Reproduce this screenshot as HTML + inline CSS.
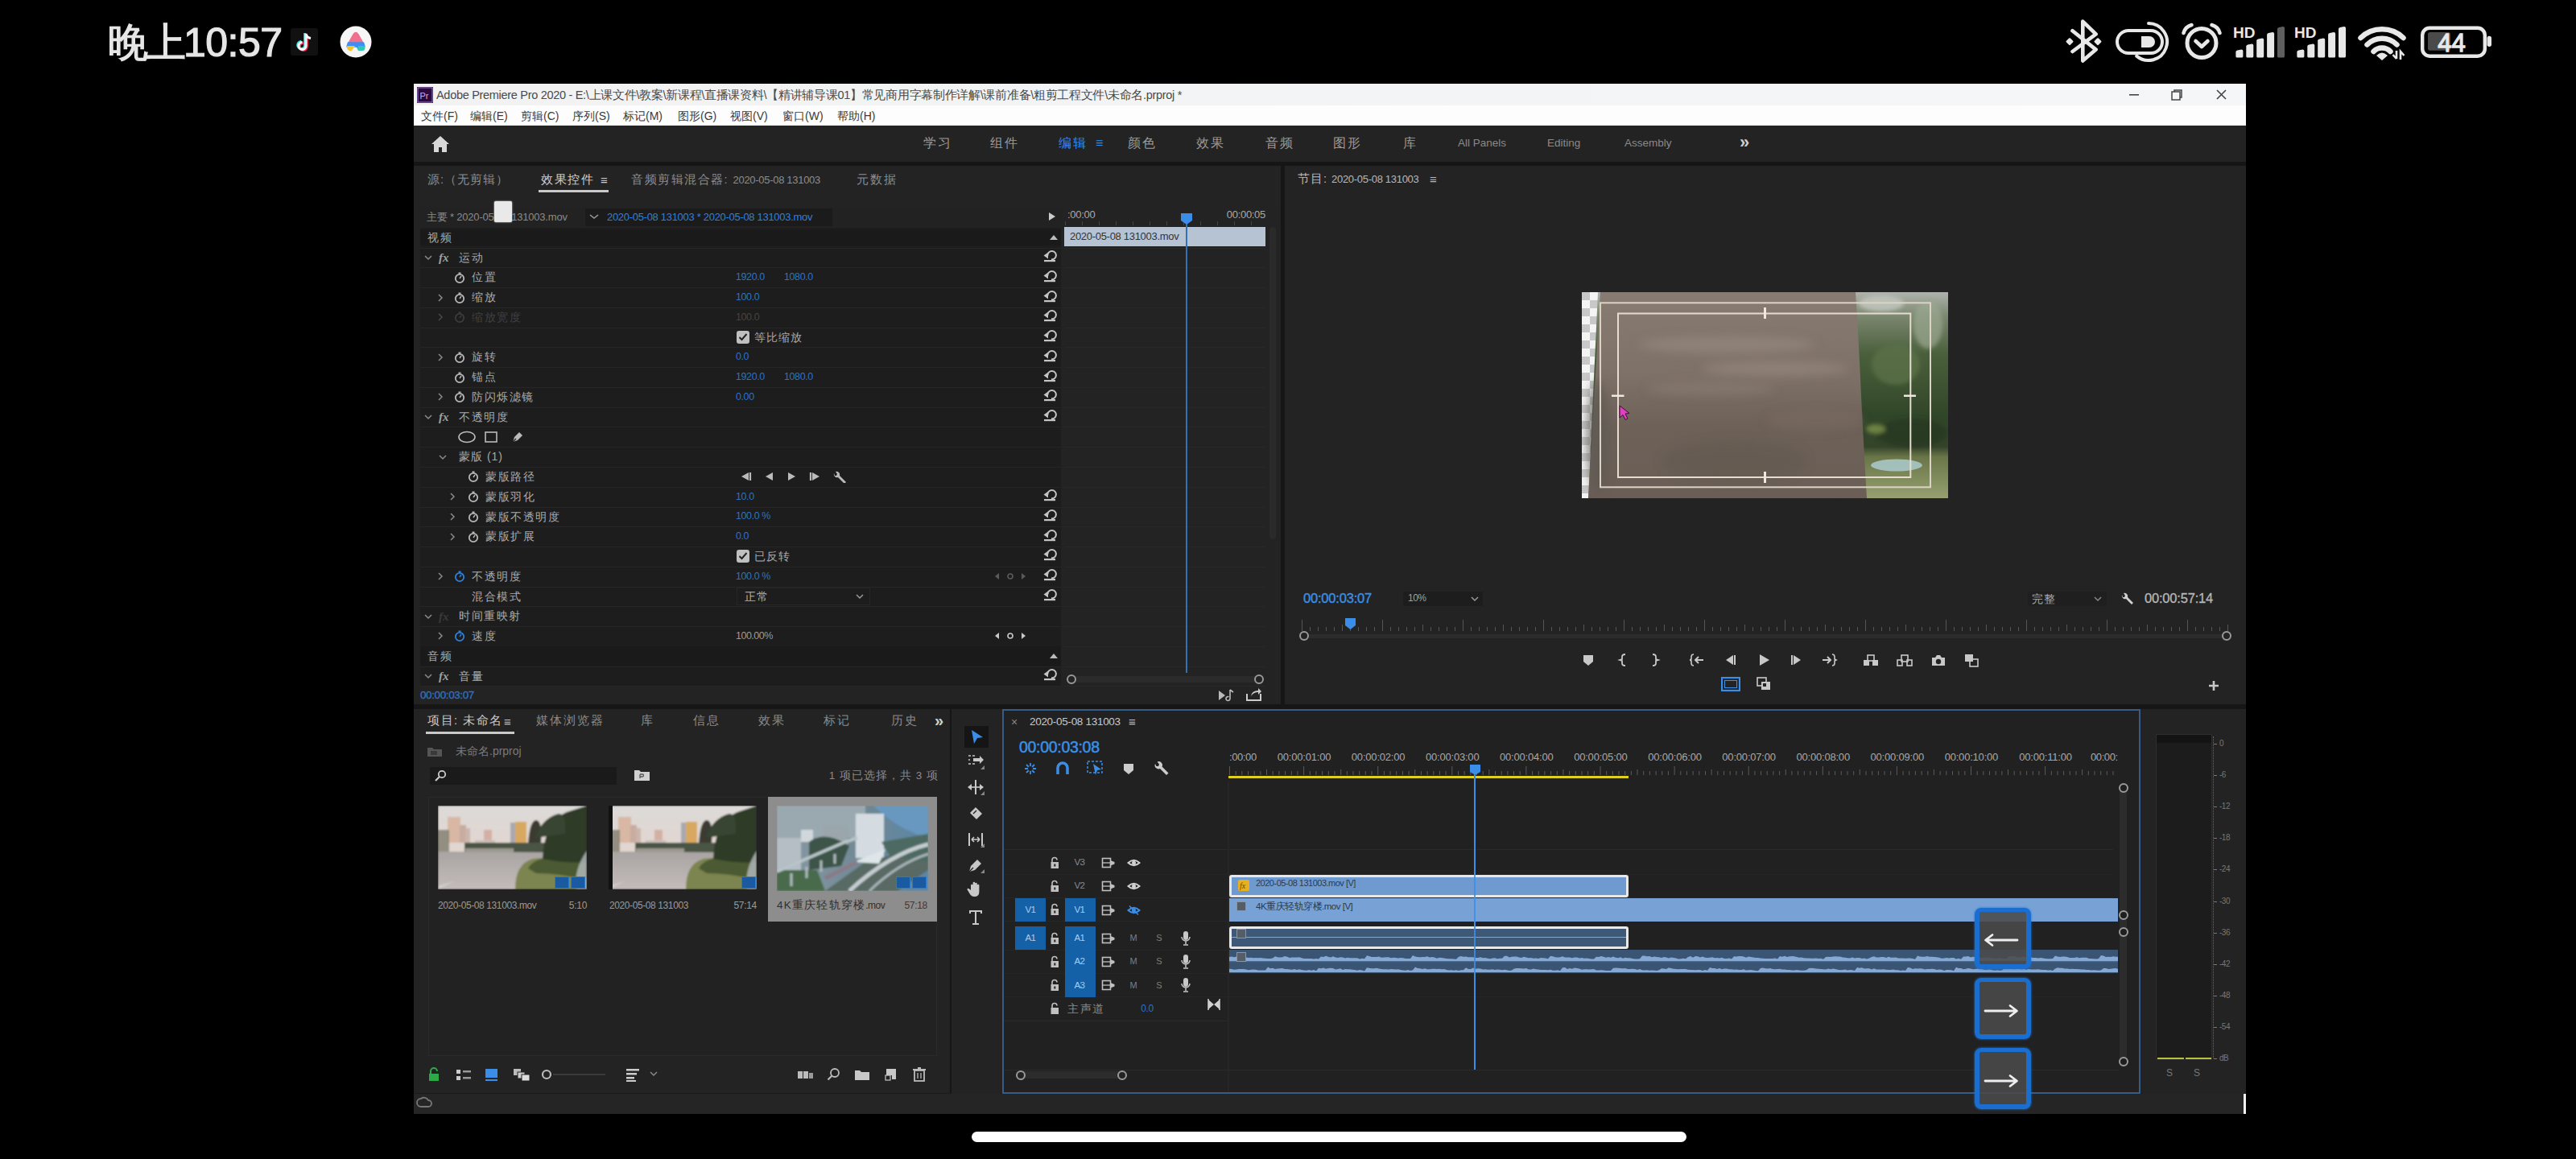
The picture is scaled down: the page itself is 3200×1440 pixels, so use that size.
<!DOCTYPE html><html><head><meta charset="utf-8"><style>html,body{margin:0;padding:0;background:#000;width:3200px;height:1440px;overflow:hidden;}body{position:relative;font-family:"Liberation Sans", sans-serif;}div{position:absolute;box-sizing:border-box;}.t{white-space:nowrap;}</style></head><body><div class="t" style="left:134px;top:23.0px;font-size:50px;line-height:60.0px;color:#e6e6e6;letter-spacing:-3px;-webkit-text-stroke:1.2px #e6e6e6;">晚上<span style="letter-spacing:-0.5px">10:57</span></div>
<svg style="position:absolute;left:361px;top:35px;" width="34" height="34" viewBox="0 0 34 34"><rect width="34" height="34" rx="3" fill="#111"/><path d="M19 7v15a4.5 4.5 0 1 1-4.5-4.5" fill="none" stroke="#25f4ee" stroke-width="3.2" transform="translate(-1.2,-1)"/><path d="M19 7v15a4.5 4.5 0 1 1-4.5-4.5" fill="none" stroke="#fe2c55" stroke-width="3.2" transform="translate(1.2,1)"/><path d="M19 7v15a4.5 4.5 0 1 1-4.5-4.5M19 7c0.5 3 2.5 5 6 5.5" fill="none" stroke="#fff" stroke-width="3"/></svg>
<svg style="position:absolute;left:422px;top:32px;" width="40" height="40" viewBox="0 0 40 40"><circle cx="20" cy="20" r="19.5" fill="#f6f6f6"/><path d="M17.5 10.5 Q20 7 22.5 10.5 L29 22 L11 22 Z" fill="#f0708e" stroke="#f0708e" stroke-width="2" stroke-linejoin="round"/><path d="M10.5 21 L29.5 21 L31 26 L9 26 Z" fill="#3d8ff2" stroke="#3d8ff2" stroke-width="1.5" stroke-linejoin="round"/><path d="M20 25 L31 25 Q32.5 31 28 31 L23 31 Z" fill="#2ec8b4"/><path d="M9 25 L19 25 L15 31 Q8.5 32 9 25 Z" fill="#f6c42c"/><path d="M19 25 L23 25 L23 28 Z" fill="#3d8ff2"/></svg>
<svg style="position:absolute;left:2562px;top:24px;" width="52" height="54" viewBox="0 0 52 54"><path d="M12.5 14.3 L41.6 37.6 L25.3 51.6 L25.3 2.6 L41.6 18.4 L12.5 40" fill="none" stroke="#e8e8e8" stroke-width="4.6" stroke-linejoin="round" stroke-linecap="round"/><rect x="5.5" y="24.2" width="7" height="7" rx="1.2" transform="rotate(45 9 27.7)" fill="#e8e8e8"/><rect x="40.5" y="24.2" width="7" height="7" rx="1.2" transform="rotate(45 44 27.7)" fill="#e8e8e8"/></svg>
<svg style="position:absolute;left:2626px;top:26px;" width="72" height="52" viewBox="0 0 72 52"><rect x="4" y="12" width="56" height="28" rx="14" fill="none" stroke="#e8e8e8" stroke-width="4"/><path d="M34 19 h10 a7 7 0 0 1 0 14 h-10z" fill="#e8e8e8"/><path d="M43 3 A23 23 0 1 1 28.2 43.6" fill="none" stroke="#e8e8e8" stroke-width="4" stroke-linecap="round"/></svg>
<svg style="position:absolute;left:2708px;top:24px;" width="54" height="54" viewBox="0 0 54 54"><circle cx="27" cy="29.5" r="18" fill="none" stroke="#e8e8e8" stroke-width="5"/><path d="M19.5 27 l7.5 7 l7.5 -7" fill="none" stroke="#e8e8e8" stroke-width="4.6" stroke-linecap="round" stroke-linejoin="round"/><path d="M4.5 17 a14 14 0 0 1 10 -10 M49.5 17 a14 14 0 0 0 -10 -10" fill="none" stroke="#e8e8e8" stroke-width="4.6" stroke-linecap="round"/></svg>
<svg style="position:absolute;left:2774px;top:31px;" width="66" height="42" viewBox="0 0 66 42"><text x="0" y="15.5" font-family="Liberation Sans" font-weight="bold" font-size="19" fill="#e8e8e8">HD</text><path d="M3.4 33.6 Q3.4 32.1 5.4 31.6 L10.4 30.6 Q12.4 30.6 12.4 32.6 L12.4 39 Q12.4 40.5 10.9 40.5 L4.9 40.5 Q3.4 40.5 3.4 39z" fill="#e8e8e8"/><path d="M16.3 26.6 Q16.3 25.1 18.3 24.6 L23.3 23.6 Q25.3 23.6 25.3 25.6 L25.3 39 Q25.3 40.5 23.8 40.5 L17.8 40.5 Q16.3 40.5 16.3 39z" fill="#e8e8e8"/><path d="M29.2 19.6 Q29.2 18.1 31.2 17.6 L36.2 16.6 Q38.2 16.6 38.2 18.6 L38.2 39 Q38.2 40.5 36.7 40.5 L30.7 40.5 Q29.2 40.5 29.2 39z" fill="#e8e8e8"/><path d="M42.1 12.0 Q42.1 10.5 44.1 10.0 L49.1 9.0 Q51.1 9.0 51.1 11.0 L51.1 39 Q51.1 40.5 49.6 40.5 L43.6 40.5 Q42.1 40.5 42.1 39z" fill="#e8e8e8"/><path d="M55.0 5.0 Q55.0 3.5 57.0 3.0 L62.0 2.0 Q64.0 2.0 64.0 4.0 L64.0 39 Q64.0 40.5 62.5 40.5 L56.5 40.5 Q55.0 40.5 55.0 39z" fill="#5e5e5e"/></svg>
<svg style="position:absolute;left:2850px;top:31px;" width="66" height="42" viewBox="0 0 66 42"><text x="0" y="15.5" font-family="Liberation Sans" font-weight="bold" font-size="19" fill="#e8e8e8">HD</text><path d="M3.4 33.6 Q3.4 32.1 5.4 31.6 L10.4 30.6 Q12.4 30.6 12.4 32.6 L12.4 39 Q12.4 40.5 10.9 40.5 L4.9 40.5 Q3.4 40.5 3.4 39z" fill="#e8e8e8"/><path d="M16.3 26.6 Q16.3 25.1 18.3 24.6 L23.3 23.6 Q25.3 23.6 25.3 25.6 L25.3 39 Q25.3 40.5 23.8 40.5 L17.8 40.5 Q16.3 40.5 16.3 39z" fill="#e8e8e8"/><path d="M29.2 19.6 Q29.2 18.1 31.2 17.6 L36.2 16.6 Q38.2 16.6 38.2 18.6 L38.2 39 Q38.2 40.5 36.7 40.5 L30.7 40.5 Q29.2 40.5 29.2 39z" fill="#e8e8e8"/><path d="M42.1 12.0 Q42.1 10.5 44.1 10.0 L49.1 9.0 Q51.1 9.0 51.1 11.0 L51.1 39 Q51.1 40.5 49.6 40.5 L43.6 40.5 Q42.1 40.5 42.1 39z" fill="#e8e8e8"/><path d="M55.0 5.0 Q55.0 3.5 57.0 3.0 L62.0 2.0 Q64.0 2.0 64.0 4.0 L64.0 39 Q64.0 40.5 62.5 40.5 L56.5 40.5 Q55.0 40.5 55.0 39z" fill="#e8e8e8"/></svg>
<svg style="position:absolute;left:2928px;top:28px;" width="62" height="48" viewBox="0 0 62 48"><path d="M4.5 19 a38 38 0 0 1 53 0" fill="none" stroke="#e8e8e8" stroke-width="6.5" stroke-linecap="round"/><path d="M12.5 27.5 a26 26 0 0 1 37 0" fill="none" stroke="#e8e8e8" stroke-width="6.5" stroke-linecap="round"/><path d="M20.5 36 a14.5 14.5 0 0 1 21 0" fill="none" stroke="#e8e8e8" stroke-width="6.5" stroke-linecap="round"/><path d="M24 41 q7 -7 14 0 l-7 6z" fill="#e8e8e8"/><path d="M49 35 v10 M44.5 40 l4.5 5 M54 46 v-10 l4.5 5" fill="none" stroke="#e8e8e8" stroke-width="2.6"/></svg>
<svg style="position:absolute;left:3005px;top:30px;" width="94" height="44" viewBox="0 0 94 44"><rect x="4.2" y="4.7" width="77.6" height="35" rx="9" fill="none" stroke="#e8e8e8" stroke-width="4.4"/><rect x="11" y="10" width="28" height="22.7" rx="2.5" fill="#4a4a4a"/><rect x="84.5" y="14.7" width="5.5" height="13.3" rx="2.7" fill="#e8e8e8"/><text x="40.5" y="33.5" text-anchor="middle" font-family="Liberation Sans" font-size="31" fill="#e8e8e8" stroke="#e8e8e8" stroke-width="1.3">44</text></svg>
<div style="left:1207px;top:1406px;width:888px;height:13px;background:#fff;border-radius:7px;"></div>
<div style="left:514px;top:104px;width:2276px;height:1280px;background:#232323;"></div>
<div style="left:514px;top:104px;width:2276px;height:27px;background:linear-gradient(90deg,#f2f2f2,#f4f6f8);"></div>
<svg style="position:absolute;left:518px;top:108px;" width="20" height="20" viewBox="0 0 20 20"><rect width="20" height="20" fill="#2b0a3d"/><rect x="1" y="1" width="18" height="18" fill="none" stroke="#9a7fd6" stroke-width="1"/><text x="3.5" y="14.5" font-family="Liberation Sans" font-size="11" fill="#c9a8ff">Pr</text></svg>
<div class="t" style="left:542px;top:109.8px;font-size:14.5px;line-height:17.4px;color:#4a4a4a;letter-spacing:-0.3px;">Adobe Premiere Pro 2020 - E:\上课文件\教案\新课程\直播课资料\【精讲辅导课01】常见商用字幕制作详解\课前准备\粗剪工程文件\未命名.prproj *</div>
<svg style="position:absolute;left:2640px;top:110px;" width="140" height="16" viewBox="0 0 140 16"><rect x="5" y="7" width="12" height="1.6" fill="#444"/><rect x="58" y="4" width="10" height="10" fill="none" stroke="#444" stroke-width="1.5"/><path d="M61 4 v-2 h9 v9 h-2" fill="none" stroke="#444" stroke-width="1.5"/><path d="M114 2 l11 11 M125 2 l-11 11" stroke="#444" stroke-width="1.6"/></svg>
<div style="left:514px;top:131px;width:2276px;height:25px;background:#fdfdfd;"></div>
<div class="t" style="left:523px;top:135.6px;font-size:14px;line-height:16.8px;color:#3a3a3a;">文件(F)</div>
<div class="t" style="left:584px;top:135.6px;font-size:14px;line-height:16.8px;color:#3a3a3a;">编辑(E)</div>
<div class="t" style="left:647px;top:135.6px;font-size:14px;line-height:16.8px;color:#3a3a3a;">剪辑(C)</div>
<div class="t" style="left:711px;top:135.6px;font-size:14px;line-height:16.8px;color:#3a3a3a;">序列(S)</div>
<div class="t" style="left:774px;top:135.6px;font-size:14px;line-height:16.8px;color:#3a3a3a;">标记(M)</div>
<div class="t" style="left:842px;top:135.6px;font-size:14px;line-height:16.8px;color:#3a3a3a;">图形(G)</div>
<div class="t" style="left:907px;top:135.6px;font-size:14px;line-height:16.8px;color:#3a3a3a;">视图(V)</div>
<div class="t" style="left:972px;top:135.6px;font-size:14px;line-height:16.8px;color:#3a3a3a;">窗口(W)</div>
<div class="t" style="left:1040px;top:135.6px;font-size:14px;line-height:16.8px;color:#3a3a3a;">帮助(H)</div>
<div style="left:514px;top:156px;width:2276px;height:45px;background:#232323;"></div>
<div style="left:514px;top:201px;width:2276px;height:5px;background:#151515;"></div>
<svg style="position:absolute;left:535px;top:168px;" width="24" height="22" viewBox="0 0 24 22"><path d="M12 1 L23 11 L20 11 L20 21 L14 21 L14 15 L10 15 L10 21 L4 21 L4 11 L1 11 Z" fill="#d8d8d8"/></svg>
<div class="t" style="left:1147px;top:168.4px;font-size:16px;line-height:19.2px;color:#9a9a9a;letter-spacing:2px;">学习</div>
<div class="t" style="left:1230px;top:168.4px;font-size:16px;line-height:19.2px;color:#9a9a9a;letter-spacing:2px;">组件</div>
<div class="t" style="left:1315px;top:168.4px;font-size:16px;line-height:19.2px;color:#2d8ceb;letter-spacing:2px;">编辑</div>
<div class="t" style="left:1401px;top:168.4px;font-size:16px;line-height:19.2px;color:#9a9a9a;letter-spacing:2px;">颜色</div>
<div class="t" style="left:1486px;top:168.4px;font-size:16px;line-height:19.2px;color:#9a9a9a;letter-spacing:2px;">效果</div>
<div class="t" style="left:1572px;top:168.4px;font-size:16px;line-height:19.2px;color:#9a9a9a;letter-spacing:2px;">音频</div>
<div class="t" style="left:1656px;top:168.4px;font-size:16px;line-height:19.2px;color:#9a9a9a;letter-spacing:2px;">图形</div>
<div class="t" style="left:1743px;top:168.4px;font-size:16px;line-height:19.2px;color:#9a9a9a;letter-spacing:2px;">库</div>
<div class="t" style="left:1811px;top:169.9px;font-size:13.5px;line-height:16.2px;color:#8a8a8a;">All Panels</div>
<div class="t" style="left:1922px;top:169.9px;font-size:13.5px;line-height:16.2px;color:#8a8a8a;">Editing</div>
<div class="t" style="left:2018px;top:169.9px;font-size:13.5px;line-height:16.2px;color:#8a8a8a;">Assembly</div>
<div class="t" style="left:1361px;top:168.4px;font-size:16px;line-height:19.2px;color:#2d8ceb;">≡</div>
<div class="t" style="left:2161px;top:163.8px;font-size:22px;line-height:26.4px;color:#cfcfcf;font-weight:bold;">»</div>
<div style="left:514px;top:206px;width:1079px;height:669px;background:#232323;"></div>
<div style="left:1591px;top:206px;width:5px;height:669px;background:#161616;"></div>
<div class="t" style="left:531px;top:214.8px;font-size:14.5px;line-height:17.4px;color:#8c8c8c;letter-spacing:1px;">源:（无剪辑）</div>
<div class="t" style="left:672px;top:214.8px;font-size:14.5px;line-height:17.4px;color:#d0d0d0;letter-spacing:1.5px;">效果控件</div>
<div class="t" style="left:746px;top:214.5px;font-size:15px;line-height:18.0px;color:#d0d0d0;">≡</div>
<div style="left:669px;top:236px;width:87px;height:3px;background:#c9c9c9;"></div>
<div class="t" style="left:784px;top:214.8px;font-size:14.5px;line-height:17.4px;color:#8c8c8c;letter-spacing:1.5px;">音频剪辑混合器: <span style="font-size:13px;letter-spacing:-0.3px">2020-05-08 131003</span></div>
<div class="t" style="left:1064px;top:214.8px;font-size:14.5px;line-height:17.4px;color:#8c8c8c;letter-spacing:2px;">元数据</div>
<div style="left:522px;top:258px;width:1069px;height:24px;background:#222;"></div>
<div class="t" style="left:530px;top:262.2px;font-size:13px;line-height:15.6px;color:#8a8a8a;letter-spacing:-0.2px;">主要 * 2020-05-08 131003.mov</div>
<div style="left:727px;top:259px;width:307px;height:22px;background:#1b1b1b;"></div>
<svg style="position:absolute;left:731px;top:264px;" width="14" height="10" viewBox="0 0 14 10"><path d="M2 3 l5 4 l5 -4" fill="none" stroke="#999" stroke-width="1.6"/></svg>
<div class="t" style="left:754px;top:262.2px;font-size:13px;line-height:15.6px;color:#2f80d8;letter-spacing:-0.3px;">2020-05-08 131003 * 2020-05-08 131003.mov</div>
<div style="left:614px;top:250px;width:22px;height:26px;background:#e9e9e9;border-radius:2px;box-shadow:0 0 2px #fff;"></div>
<div style="left:522px;top:283px;width:796px;height:570px;background:#1d1d1d;"></div>
<div style="left:522px;top:285px;width:796px;height:20px;background:#1a1a1a;"></div>
<div class="t" style="left:531px;top:287.2px;font-size:14px;line-height:16.8px;color:#a9a9a9;letter-spacing:2px;">视频</div>
<svg style="position:absolute;left:1302px;top:290px;" width="14" height="10" viewBox="0 0 14 10"><path d="M2 8 l5 -6 l5 6z" fill="#bbb"/></svg>
<div style="left:522px;top:308px;width:796px;height:1px;background:#262626;"></div>
<div style="left:522px;top:332px;width:796px;height:1px;background:#262626;"></div>
<div style="left:522px;top:357px;width:796px;height:1px;background:#262626;"></div>
<div style="left:522px;top:382px;width:796px;height:1px;background:#262626;"></div>
<div style="left:522px;top:407px;width:796px;height:1px;background:#262626;"></div>
<div style="left:522px;top:431px;width:796px;height:1px;background:#262626;"></div>
<div style="left:522px;top:456px;width:796px;height:1px;background:#262626;"></div>
<div style="left:522px;top:481px;width:796px;height:1px;background:#262626;"></div>
<div style="left:522px;top:506px;width:796px;height:1px;background:#262626;"></div>
<div style="left:522px;top:530px;width:796px;height:1px;background:#262626;"></div>
<div style="left:522px;top:555px;width:796px;height:1px;background:#262626;"></div>
<div style="left:522px;top:580px;width:796px;height:1px;background:#262626;"></div>
<div style="left:522px;top:605px;width:796px;height:1px;background:#262626;"></div>
<div style="left:522px;top:630px;width:796px;height:1px;background:#262626;"></div>
<div style="left:522px;top:654px;width:796px;height:1px;background:#262626;"></div>
<div style="left:522px;top:679px;width:796px;height:1px;background:#262626;"></div>
<div style="left:522px;top:704px;width:796px;height:1px;background:#262626;"></div>
<div style="left:522px;top:729px;width:796px;height:1px;background:#262626;"></div>
<div style="left:522px;top:753px;width:796px;height:1px;background:#262626;"></div>
<div style="left:522px;top:778px;width:796px;height:1px;background:#262626;"></div>
<div style="left:522px;top:803px;width:796px;height:1px;background:#262626;"></div>
<div style="left:522px;top:828px;width:796px;height:1px;background:#262626;"></div>
<div style="left:522px;top:852px;width:796px;height:1px;background:#262626;"></div>
<div style="left:522px;top:803px;width:796px;height:25px;background:#1a1a1a;"></div>
<svg style="position:absolute;left:526px;top:315.0px;" width="12" height="10" viewBox="0 0 12 10"><path d="M2 3 l4 4 l4 -4" fill="none" stroke="#8a8a8a" stroke-width="1.5"/></svg>
<div class="t" style="left:545px;top:311.0px;font-size:15px;line-height:18.0px;color:#a0a0a0;font-family:'Liberation Serif',serif;font-weight:bold;"><i>fx</i></div>
<div class="t" style="left:570px;top:311.6px;font-size:14px;line-height:16.8px;color:#a9a9a9;letter-spacing:1.5px;">运动</div>
<svg style="position:absolute;left:563px;top:336.76px;" width="16" height="16" viewBox="0 0 16 16"><circle cx="8" cy="9" r="5.2" fill="none" stroke="#b8b8b8" stroke-width="1.8"/><rect x="6.5" y="1.5" width="3" height="2" fill="#b8b8b8"/><path d="M8 9 l2 -3" stroke="#b8b8b8" stroke-width="1.4"/></svg>
<div class="t" style="left:586px;top:336.4px;font-size:14px;line-height:16.8px;color:#a9a9a9;letter-spacing:1.5px;">位置</div>
<div class="t" style="left:914px;top:337.3px;font-size:12.5px;line-height:15.0px;color:#2b72c6;letter-spacing:-0.4px;">1920.0</div>
<div class="t" style="left:974px;top:337.3px;font-size:12.5px;line-height:15.0px;color:#2b72c6;letter-spacing:-0.4px;">1080.0</div>
<svg style="position:absolute;left:542px;top:363.52px;" width="10" height="12" viewBox="0 0 10 12"><path d="M3 2 l4 4 l-4 4" fill="none" stroke="#8a8a8a" stroke-width="1.5"/></svg>
<svg style="position:absolute;left:563px;top:361.52px;" width="16" height="16" viewBox="0 0 16 16"><circle cx="8" cy="9" r="5.2" fill="none" stroke="#b8b8b8" stroke-width="1.8"/><rect x="6.5" y="1.5" width="3" height="2" fill="#b8b8b8"/><path d="M8 9 l2 -3" stroke="#b8b8b8" stroke-width="1.4"/></svg>
<div class="t" style="left:586px;top:361.1px;font-size:14px;line-height:16.8px;color:#a9a9a9;letter-spacing:1.5px;">缩放</div>
<div class="t" style="left:914px;top:362.0px;font-size:12.5px;line-height:15.0px;color:#2b72c6;letter-spacing:-0.4px;">100.0</div>
<svg style="position:absolute;left:542px;top:388.28px;" width="10" height="12" viewBox="0 0 10 12"><path d="M3 2 l4 4 l-4 4" fill="none" stroke="#4a4a4a" stroke-width="1.5"/></svg>
<svg style="position:absolute;left:563px;top:386.28px;" width="16" height="16" viewBox="0 0 16 16"><circle cx="8" cy="9" r="5.2" fill="none" stroke="#3c3c3c" stroke-width="1.8"/><rect x="6.5" y="1.5" width="3" height="2" fill="#3c3c3c"/><path d="M8 9 l2 -3" stroke="#3c3c3c" stroke-width="1.4"/></svg>
<div class="t" style="left:586px;top:385.9px;font-size:14px;line-height:16.8px;color:#404040;letter-spacing:1.5px;">缩放宽度</div>
<div class="t" style="left:914px;top:386.8px;font-size:12.5px;line-height:15.0px;color:#444;letter-spacing:-0.4px;">100.0</div>
<svg style="position:absolute;left:542px;top:437.8px;" width="10" height="12" viewBox="0 0 10 12"><path d="M3 2 l4 4 l-4 4" fill="none" stroke="#8a8a8a" stroke-width="1.5"/></svg>
<svg style="position:absolute;left:563px;top:435.8px;" width="16" height="16" viewBox="0 0 16 16"><circle cx="8" cy="9" r="5.2" fill="none" stroke="#b8b8b8" stroke-width="1.8"/><rect x="6.5" y="1.5" width="3" height="2" fill="#b8b8b8"/><path d="M8 9 l2 -3" stroke="#b8b8b8" stroke-width="1.4"/></svg>
<div class="t" style="left:586px;top:435.4px;font-size:14px;line-height:16.8px;color:#a9a9a9;letter-spacing:1.5px;">旋转</div>
<div class="t" style="left:914px;top:436.3px;font-size:12.5px;line-height:15.0px;color:#2b72c6;letter-spacing:-0.4px;">0.0</div>
<svg style="position:absolute;left:563px;top:460.56px;" width="16" height="16" viewBox="0 0 16 16"><circle cx="8" cy="9" r="5.2" fill="none" stroke="#b8b8b8" stroke-width="1.8"/><rect x="6.5" y="1.5" width="3" height="2" fill="#b8b8b8"/><path d="M8 9 l2 -3" stroke="#b8b8b8" stroke-width="1.4"/></svg>
<div class="t" style="left:586px;top:460.2px;font-size:14px;line-height:16.8px;color:#a9a9a9;letter-spacing:1.5px;">锚点</div>
<div class="t" style="left:914px;top:461.1px;font-size:12.5px;line-height:15.0px;color:#2b72c6;letter-spacing:-0.4px;">1920.0</div>
<div class="t" style="left:974px;top:461.1px;font-size:12.5px;line-height:15.0px;color:#2b72c6;letter-spacing:-0.4px;">1080.0</div>
<svg style="position:absolute;left:542px;top:487.32000000000005px;" width="10" height="12" viewBox="0 0 10 12"><path d="M3 2 l4 4 l-4 4" fill="none" stroke="#8a8a8a" stroke-width="1.5"/></svg>
<svg style="position:absolute;left:563px;top:485.32000000000005px;" width="16" height="16" viewBox="0 0 16 16"><circle cx="8" cy="9" r="5.2" fill="none" stroke="#b8b8b8" stroke-width="1.8"/><rect x="6.5" y="1.5" width="3" height="2" fill="#b8b8b8"/><path d="M8 9 l2 -3" stroke="#b8b8b8" stroke-width="1.4"/></svg>
<div class="t" style="left:586px;top:484.9px;font-size:14px;line-height:16.8px;color:#a9a9a9;letter-spacing:1.5px;">防闪烁滤镜</div>
<div class="t" style="left:914px;top:485.8px;font-size:12.5px;line-height:15.0px;color:#2b72c6;letter-spacing:-0.4px;">0.00</div>
<svg style="position:absolute;left:526px;top:513.08px;" width="12" height="10" viewBox="0 0 12 10"><path d="M2 3 l4 4 l4 -4" fill="none" stroke="#8a8a8a" stroke-width="1.5"/></svg>
<div class="t" style="left:545px;top:509.1px;font-size:15px;line-height:18.0px;color:#a0a0a0;font-family:'Liberation Serif',serif;font-weight:bold;"><i>fx</i></div>
<div class="t" style="left:570px;top:509.7px;font-size:14px;line-height:16.8px;color:#a9a9a9;letter-spacing:1.5px;">不透明度</div>
<svg style="position:absolute;left:1295px;top:308.0px;" width="18" height="18" viewBox="0 0 18 18"><path d="M1.5 9.5 L7 5.5 L7 13.5z" fill="#c4c4c4"/><path d="M6.5 9.5 A5.2 5.2 0 1 1 11 14.3" fill="none" stroke="#c4c4c4" stroke-width="2"/><rect x="2" y="15" width="14" height="2.2" fill="#c4c4c4"/></svg>
<svg style="position:absolute;left:1295px;top:332.76px;" width="18" height="18" viewBox="0 0 18 18"><path d="M1.5 9.5 L7 5.5 L7 13.5z" fill="#c4c4c4"/><path d="M6.5 9.5 A5.2 5.2 0 1 1 11 14.3" fill="none" stroke="#c4c4c4" stroke-width="2"/><rect x="2" y="15" width="14" height="2.2" fill="#c4c4c4"/></svg>
<svg style="position:absolute;left:1295px;top:357.52px;" width="18" height="18" viewBox="0 0 18 18"><path d="M1.5 9.5 L7 5.5 L7 13.5z" fill="#c4c4c4"/><path d="M6.5 9.5 A5.2 5.2 0 1 1 11 14.3" fill="none" stroke="#c4c4c4" stroke-width="2"/><rect x="2" y="15" width="14" height="2.2" fill="#c4c4c4"/></svg>
<svg style="position:absolute;left:1295px;top:382.28px;" width="18" height="18" viewBox="0 0 18 18"><path d="M1.5 9.5 L7 5.5 L7 13.5z" fill="#c4c4c4"/><path d="M6.5 9.5 A5.2 5.2 0 1 1 11 14.3" fill="none" stroke="#c4c4c4" stroke-width="2"/><rect x="2" y="15" width="14" height="2.2" fill="#c4c4c4"/></svg>
<svg style="position:absolute;left:1295px;top:407.04px;" width="18" height="18" viewBox="0 0 18 18"><path d="M1.5 9.5 L7 5.5 L7 13.5z" fill="#c4c4c4"/><path d="M6.5 9.5 A5.2 5.2 0 1 1 11 14.3" fill="none" stroke="#c4c4c4" stroke-width="2"/><rect x="2" y="15" width="14" height="2.2" fill="#c4c4c4"/></svg>
<svg style="position:absolute;left:1295px;top:431.8px;" width="18" height="18" viewBox="0 0 18 18"><path d="M1.5 9.5 L7 5.5 L7 13.5z" fill="#c4c4c4"/><path d="M6.5 9.5 A5.2 5.2 0 1 1 11 14.3" fill="none" stroke="#c4c4c4" stroke-width="2"/><rect x="2" y="15" width="14" height="2.2" fill="#c4c4c4"/></svg>
<svg style="position:absolute;left:1295px;top:456.56px;" width="18" height="18" viewBox="0 0 18 18"><path d="M1.5 9.5 L7 5.5 L7 13.5z" fill="#c4c4c4"/><path d="M6.5 9.5 A5.2 5.2 0 1 1 11 14.3" fill="none" stroke="#c4c4c4" stroke-width="2"/><rect x="2" y="15" width="14" height="2.2" fill="#c4c4c4"/></svg>
<svg style="position:absolute;left:1295px;top:481.32000000000005px;" width="18" height="18" viewBox="0 0 18 18"><path d="M1.5 9.5 L7 5.5 L7 13.5z" fill="#c4c4c4"/><path d="M6.5 9.5 A5.2 5.2 0 1 1 11 14.3" fill="none" stroke="#c4c4c4" stroke-width="2"/><rect x="2" y="15" width="14" height="2.2" fill="#c4c4c4"/></svg>
<svg style="position:absolute;left:1295px;top:506.08000000000004px;" width="18" height="18" viewBox="0 0 18 18"><path d="M1.5 9.5 L7 5.5 L7 13.5z" fill="#c4c4c4"/><path d="M6.5 9.5 A5.2 5.2 0 1 1 11 14.3" fill="none" stroke="#c4c4c4" stroke-width="2"/><rect x="2" y="15" width="14" height="2.2" fill="#c4c4c4"/></svg>
<div style="left:915px;top:411px;width:16px;height:16px;background:#c0c0c0;border-radius:3px;"></div>
<svg style="position:absolute;left:915px;top:411px;" width="16" height="16" viewBox="0 0 16 16"><path d="M3.5 8 l3 3 l6 -7" fill="none" stroke="#222" stroke-width="2"/></svg>
<div class="t" style="left:937px;top:410.6px;font-size:14px;line-height:16.8px;color:#a9a9a9;letter-spacing:1px;">等比缩放</div>
<svg style="position:absolute;left:568px;top:534.84px;" width="24" height="16" viewBox="0 0 24 16"><ellipse cx="12" cy="8" rx="10" ry="6.5" fill="none" stroke="#bbb" stroke-width="1.6"/></svg>
<svg style="position:absolute;left:601px;top:534.84px;" width="18" height="16" viewBox="0 0 18 16"><rect x="2" y="2" width="14" height="12" fill="none" stroke="#bbb" stroke-width="1.6"/></svg>
<svg style="position:absolute;left:634px;top:533.84px;" width="18" height="18" viewBox="0 0 18 18"><path d="M3 15 l2 -6 l6 -6 l4 4 l-6 6 z" fill="#bbb"/><path d="M3 15 l4 -4" stroke="#1f1f1f" stroke-width="1.2"/></svg>
<svg style="position:absolute;left:544px;top:562.6px;" width="12" height="10" viewBox="0 0 12 10"><path d="M2 3 l4 4 l4 -4" fill="none" stroke="#8a8a8a" stroke-width="1.5"/></svg>
<div class="t" style="left:570px;top:559.2px;font-size:14px;line-height:16.8px;color:#a9a9a9;letter-spacing:1px;">蒙版 (1)</div>
<svg style="position:absolute;left:580px;top:584.36px;" width="16" height="16" viewBox="0 0 16 16"><circle cx="8" cy="9" r="5.2" fill="none" stroke="#b8b8b8" stroke-width="1.8"/><rect x="6.5" y="1.5" width="3" height="2" fill="#b8b8b8"/><path d="M8 9 l2 -3" stroke="#b8b8b8" stroke-width="1.4"/></svg>
<div class="t" style="left:603px;top:584.0px;font-size:14px;line-height:16.8px;color:#a9a9a9;letter-spacing:1.5px;">蒙版路径</div>
<svg style="position:absolute;left:918px;top:584.36px;" width="140" height="16" viewBox="0 0 140 16"><path d="M12 3 l-9 5 l9 5z" fill="#bbb"/><path d="M14 3 v10" stroke="#bbb" stroke-width="2.2"/><path d="M42 3 l-9 5 l9 5z" fill="#bbb"/><path d="M61 3 l9 5 l-9 5z" fill="#bbb"/><path d="M89 3 v10" stroke="#bbb" stroke-width="2.2"/><path d="M91 3 l9 5 l-9 5z" fill="#bbb"/><path d="M118 4 a4 4 0 0 0 5 5 l8 8 l2 -2 l-8 -8 a4 4 0 0 0 -5 -5 l2 3 l-1 2 l-2 0z" fill="#bbb"/></svg>
<svg style="position:absolute;left:557px;top:611.12px;" width="10" height="12" viewBox="0 0 10 12"><path d="M3 2 l4 4 l-4 4" fill="none" stroke="#8a8a8a" stroke-width="1.5"/></svg>
<svg style="position:absolute;left:580px;top:609.12px;" width="16" height="16" viewBox="0 0 16 16"><circle cx="8" cy="9" r="5.2" fill="none" stroke="#b8b8b8" stroke-width="1.8"/><rect x="6.5" y="1.5" width="3" height="2" fill="#b8b8b8"/><path d="M8 9 l2 -3" stroke="#b8b8b8" stroke-width="1.4"/></svg>
<div class="t" style="left:603px;top:608.7px;font-size:14px;line-height:16.8px;color:#a9a9a9;letter-spacing:1.5px;">蒙版羽化</div>
<div class="t" style="left:914px;top:609.6px;font-size:12.5px;line-height:15.0px;color:#2b72c6;letter-spacing:-0.4px;">10.0</div>
<svg style="position:absolute;left:557px;top:635.88px;" width="10" height="12" viewBox="0 0 10 12"><path d="M3 2 l4 4 l-4 4" fill="none" stroke="#8a8a8a" stroke-width="1.5"/></svg>
<svg style="position:absolute;left:580px;top:633.88px;" width="16" height="16" viewBox="0 0 16 16"><circle cx="8" cy="9" r="5.2" fill="none" stroke="#b8b8b8" stroke-width="1.8"/><rect x="6.5" y="1.5" width="3" height="2" fill="#b8b8b8"/><path d="M8 9 l2 -3" stroke="#b8b8b8" stroke-width="1.4"/></svg>
<div class="t" style="left:603px;top:633.5px;font-size:14px;line-height:16.8px;color:#a9a9a9;letter-spacing:1.5px;">蒙版不透明度</div>
<div class="t" style="left:914px;top:634.4px;font-size:12.5px;line-height:15.0px;color:#2b72c6;letter-spacing:-0.4px;">100.0 %</div>
<svg style="position:absolute;left:557px;top:660.6400000000001px;" width="10" height="12" viewBox="0 0 10 12"><path d="M3 2 l4 4 l-4 4" fill="none" stroke="#8a8a8a" stroke-width="1.5"/></svg>
<svg style="position:absolute;left:580px;top:658.6400000000001px;" width="16" height="16" viewBox="0 0 16 16"><circle cx="8" cy="9" r="5.2" fill="none" stroke="#b8b8b8" stroke-width="1.8"/><rect x="6.5" y="1.5" width="3" height="2" fill="#b8b8b8"/><path d="M8 9 l2 -3" stroke="#b8b8b8" stroke-width="1.4"/></svg>
<div class="t" style="left:603px;top:658.2px;font-size:14px;line-height:16.8px;color:#a9a9a9;letter-spacing:1.5px;">蒙版扩展</div>
<div class="t" style="left:914px;top:659.1px;font-size:12.5px;line-height:15.0px;color:#2b72c6;letter-spacing:-0.4px;">0.0</div>
<div style="left:915px;top:683px;width:16px;height:16px;background:#c0c0c0;border-radius:3px;"></div>
<svg style="position:absolute;left:915px;top:683px;" width="16" height="16" viewBox="0 0 16 16"><path d="M3.5 8 l3 3 l6 -7" fill="none" stroke="#222" stroke-width="2"/></svg>
<div class="t" style="left:937px;top:683.0px;font-size:14px;line-height:16.8px;color:#a9a9a9;letter-spacing:1px;">已反转</div>
<svg style="position:absolute;left:542px;top:710.1600000000001px;" width="10" height="12" viewBox="0 0 10 12"><path d="M3 2 l4 4 l-4 4" fill="none" stroke="#8a8a8a" stroke-width="1.5"/></svg>
<svg style="position:absolute;left:563px;top:708.1600000000001px;" width="16" height="16" viewBox="0 0 16 16"><circle cx="8" cy="9" r="5.2" fill="none" stroke="#2f80d8" stroke-width="1.8"/><rect x="6.5" y="1.5" width="3" height="2" fill="#2f80d8"/><path d="M8 9 l2 -3" stroke="#2f80d8" stroke-width="1.4"/></svg>
<div class="t" style="left:586px;top:707.8px;font-size:14px;line-height:16.8px;color:#a9a9a9;letter-spacing:1.5px;">不透明度</div>
<div class="t" style="left:914px;top:708.7px;font-size:12.5px;line-height:15.0px;color:#2b72c6;letter-spacing:-0.4px;">100.0 %</div>
<svg style="position:absolute;left:1233px;top:709.1600000000001px;" width="44" height="14" viewBox="0 0 44 14"><path d="M8 3 l-5 4 l5 4z" fill="#5a5a5a"/><circle cx="22" cy="7" r="3" fill="none" stroke="#5a5a5a" stroke-width="1.6"/><path d="M36 3 l5 4 l-5 4z" fill="#5a5a5a"/></svg>
<div class="t" style="left:586px;top:732.5px;font-size:14px;line-height:16.8px;color:#a9a9a9;letter-spacing:1.5px;">混合模式</div>
<div style="left:915px;top:730px;width:166px;height:22px;background:#1d1d1d;border:1px solid #262626;"></div>
<div class="t" style="left:925px;top:732.5px;font-size:14px;line-height:16.8px;color:#b0b0b0;letter-spacing:1px;">正常</div>
<svg style="position:absolute;left:1062px;top:735.9200000000001px;" width="12" height="10" viewBox="0 0 12 10"><path d="M2 3 l4 4 l4 -4" fill="none" stroke="#999" stroke-width="1.5"/></svg>
<svg style="position:absolute;left:526px;top:760.6800000000001px;" width="12" height="10" viewBox="0 0 12 10"><path d="M2 3 l4 4 l4 -4" fill="none" stroke="#8a8a8a" stroke-width="1.5"/></svg>
<div class="t" style="left:545px;top:756.7px;font-size:15px;line-height:18.0px;color:#3a3a3a;font-family:'Liberation Serif',serif;font-weight:bold;"><i>fx</i></div>
<div class="t" style="left:570px;top:757.3px;font-size:14px;line-height:16.8px;color:#a9a9a9;letter-spacing:1.5px;">时间重映射</div>
<svg style="position:absolute;left:542px;top:784.44px;" width="10" height="12" viewBox="0 0 10 12"><path d="M3 2 l4 4 l-4 4" fill="none" stroke="#8a8a8a" stroke-width="1.5"/></svg>
<svg style="position:absolute;left:563px;top:782.44px;" width="16" height="16" viewBox="0 0 16 16"><circle cx="8" cy="9" r="5.2" fill="none" stroke="#2f80d8" stroke-width="1.8"/><rect x="6.5" y="1.5" width="3" height="2" fill="#2f80d8"/><path d="M8 9 l2 -3" stroke="#2f80d8" stroke-width="1.4"/></svg>
<div class="t" style="left:586px;top:782.0px;font-size:14px;line-height:16.8px;color:#a9a9a9;letter-spacing:1.5px;">速度</div>
<div class="t" style="left:914px;top:782.9px;font-size:12.5px;line-height:15.0px;color:#9a9a9a;letter-spacing:-0.5px;">100.00%</div>
<svg style="position:absolute;left:1233px;top:783.44px;" width="44" height="14" viewBox="0 0 44 14"><path d="M8 3 l-5 4 l5 4z" fill="#c8c8c8"/><circle cx="22" cy="7" r="3" fill="none" stroke="#c8c8c8" stroke-width="1.6"/><path d="M36 3 l5 4 l-5 4z" fill="#c8c8c8"/></svg>
<div class="t" style="left:531px;top:806.8px;font-size:14px;line-height:16.8px;color:#a9a9a9;letter-spacing:2px;">音频</div>
<svg style="position:absolute;left:1302px;top:810.2px;" width="14" height="10" viewBox="0 0 14 10"><path d="M2 8 l5 -6 l5 6z" fill="#bbb"/></svg>
<svg style="position:absolute;left:526px;top:834.96px;" width="12" height="10" viewBox="0 0 12 10"><path d="M2 3 l4 4 l4 -4" fill="none" stroke="#8a8a8a" stroke-width="1.5"/></svg>
<div class="t" style="left:545px;top:831.0px;font-size:15px;line-height:18.0px;color:#a0a0a0;font-family:'Liberation Serif',serif;font-weight:bold;"><i>fx</i></div>
<div class="t" style="left:570px;top:831.6px;font-size:14px;line-height:16.8px;color:#a9a9a9;letter-spacing:2px;">音量</div>
<svg style="position:absolute;left:1295px;top:605.12px;" width="18" height="18" viewBox="0 0 18 18"><path d="M1.5 9.5 L7 5.5 L7 13.5z" fill="#c4c4c4"/><path d="M6.5 9.5 A5.2 5.2 0 1 1 11 14.3" fill="none" stroke="#c4c4c4" stroke-width="2"/><rect x="2" y="15" width="14" height="2.2" fill="#c4c4c4"/></svg>
<svg style="position:absolute;left:1295px;top:629.88px;" width="18" height="18" viewBox="0 0 18 18"><path d="M1.5 9.5 L7 5.5 L7 13.5z" fill="#c4c4c4"/><path d="M6.5 9.5 A5.2 5.2 0 1 1 11 14.3" fill="none" stroke="#c4c4c4" stroke-width="2"/><rect x="2" y="15" width="14" height="2.2" fill="#c4c4c4"/></svg>
<svg style="position:absolute;left:1295px;top:654.6400000000001px;" width="18" height="18" viewBox="0 0 18 18"><path d="M1.5 9.5 L7 5.5 L7 13.5z" fill="#c4c4c4"/><path d="M6.5 9.5 A5.2 5.2 0 1 1 11 14.3" fill="none" stroke="#c4c4c4" stroke-width="2"/><rect x="2" y="15" width="14" height="2.2" fill="#c4c4c4"/></svg>
<svg style="position:absolute;left:1295px;top:679.4000000000001px;" width="18" height="18" viewBox="0 0 18 18"><path d="M1.5 9.5 L7 5.5 L7 13.5z" fill="#c4c4c4"/><path d="M6.5 9.5 A5.2 5.2 0 1 1 11 14.3" fill="none" stroke="#c4c4c4" stroke-width="2"/><rect x="2" y="15" width="14" height="2.2" fill="#c4c4c4"/></svg>
<svg style="position:absolute;left:1295px;top:704.1600000000001px;" width="18" height="18" viewBox="0 0 18 18"><path d="M1.5 9.5 L7 5.5 L7 13.5z" fill="#c4c4c4"/><path d="M6.5 9.5 A5.2 5.2 0 1 1 11 14.3" fill="none" stroke="#c4c4c4" stroke-width="2"/><rect x="2" y="15" width="14" height="2.2" fill="#c4c4c4"/></svg>
<svg style="position:absolute;left:1295px;top:728.9200000000001px;" width="18" height="18" viewBox="0 0 18 18"><path d="M1.5 9.5 L7 5.5 L7 13.5z" fill="#c4c4c4"/><path d="M6.5 9.5 A5.2 5.2 0 1 1 11 14.3" fill="none" stroke="#c4c4c4" stroke-width="2"/><rect x="2" y="15" width="14" height="2.2" fill="#c4c4c4"/></svg>
<svg style="position:absolute;left:1295px;top:827.96px;" width="18" height="18" viewBox="0 0 18 18"><path d="M1.5 9.5 L7 5.5 L7 13.5z" fill="#c4c4c4"/><path d="M6.5 9.5 A5.2 5.2 0 1 1 11 14.3" fill="none" stroke="#c4c4c4" stroke-width="2"/><rect x="2" y="15" width="14" height="2.2" fill="#c4c4c4"/></svg>
<div class="t" style="left:522px;top:855.9px;font-size:13.5px;line-height:16.2px;color:#2b72c6;letter-spacing:-0.4px;-webkit-text-stroke:0.3px #2b72c6;">00:00:03:07</div>
<div style="left:1320px;top:258px;width:270px;height:595px;background:#232323;"></div>
<div style="left:1322px;top:308px;width:250px;height:1px;background:#282828;"></div>
<div style="left:1322px;top:332px;width:250px;height:1px;background:#282828;"></div>
<div style="left:1322px;top:357px;width:250px;height:1px;background:#282828;"></div>
<div style="left:1322px;top:382px;width:250px;height:1px;background:#282828;"></div>
<div style="left:1322px;top:407px;width:250px;height:1px;background:#282828;"></div>
<div style="left:1322px;top:431px;width:250px;height:1px;background:#282828;"></div>
<div style="left:1322px;top:456px;width:250px;height:1px;background:#282828;"></div>
<div style="left:1322px;top:481px;width:250px;height:1px;background:#282828;"></div>
<div style="left:1322px;top:506px;width:250px;height:1px;background:#282828;"></div>
<div style="left:1322px;top:530px;width:250px;height:1px;background:#282828;"></div>
<div style="left:1322px;top:555px;width:250px;height:1px;background:#282828;"></div>
<div style="left:1322px;top:580px;width:250px;height:1px;background:#282828;"></div>
<div style="left:1322px;top:605px;width:250px;height:1px;background:#282828;"></div>
<div style="left:1322px;top:630px;width:250px;height:1px;background:#282828;"></div>
<div style="left:1322px;top:654px;width:250px;height:1px;background:#282828;"></div>
<div style="left:1322px;top:679px;width:250px;height:1px;background:#282828;"></div>
<div style="left:1322px;top:704px;width:250px;height:1px;background:#282828;"></div>
<div style="left:1322px;top:729px;width:250px;height:1px;background:#282828;"></div>
<div style="left:1322px;top:753px;width:250px;height:1px;background:#282828;"></div>
<div style="left:1322px;top:778px;width:250px;height:1px;background:#282828;"></div>
<div style="left:1322px;top:803px;width:250px;height:1px;background:#282828;"></div>
<div style="left:1322px;top:828px;width:250px;height:1px;background:#282828;"></div>
<div style="left:1322px;top:852px;width:250px;height:1px;background:#282828;"></div>
<svg style="position:absolute;left:1300px;top:262px;" width="14" height="14" viewBox="0 0 14 14"><path d="M3 2 l8 5 l-8 5z" fill="#ccc"/></svg>
<div class="t" style="left:1326px;top:259.2px;font-size:13px;line-height:15.6px;color:#a8a8a8;letter-spacing:-0.3px;">:00:00</div>
<div class="t" style="right:1628px;top:259.2px;font-size:13px;line-height:15.6px;color:#a8a8a8;letter-spacing:-0.3px;">00:00:05</div>
<div style="left:1323px;top:275px;width:1px;height:5px;background:#444;"></div>
<div style="left:1344px;top:275px;width:1px;height:5px;background:#444;"></div>
<div style="left:1365px;top:275px;width:1px;height:5px;background:#444;"></div>
<div style="left:1386px;top:275px;width:1px;height:5px;background:#444;"></div>
<div style="left:1407px;top:275px;width:1px;height:5px;background:#444;"></div>
<div style="left:1428px;top:275px;width:1px;height:5px;background:#444;"></div>
<div style="left:1449px;top:275px;width:1px;height:5px;background:#444;"></div>
<div style="left:1470px;top:275px;width:1px;height:5px;background:#444;"></div>
<div style="left:1491px;top:275px;width:1px;height:5px;background:#444;"></div>
<div style="left:1512px;top:275px;width:1px;height:5px;background:#444;"></div>
<div style="left:1533px;top:275px;width:1px;height:5px;background:#444;"></div>
<div style="left:1554px;top:275px;width:1px;height:5px;background:#444;"></div>
<div style="left:1322px;top:282px;width:250px;height:24px;background:#b6c3d3;"></div>
<div class="t" style="left:1329px;top:286.2px;font-size:13px;line-height:15.6px;color:#333;letter-spacing:-0.3px;">2020-05-08 131003.mov</div>
<div style="left:1473px;top:270px;width:1.5px;height:566px;background:#3470b8;"></div>
<svg style="position:absolute;left:1466px;top:264px;" width="16" height="16" viewBox="0 0 16 16"><path d="M1 1 h14 v9 l-7 5 l-7 -5z" fill="#3a8ee8"/></svg>
<div style="left:1577px;top:282px;width:8px;height:388px;background:#2a2a2a;border-radius:4px;"></div>
<div style="left:1331px;top:840px;width:233px;height:8px;background:#2b2b2b;"></div>
<svg style="position:absolute;left:1324px;top:837px;" width="14" height="14" viewBox="0 0 14 14"><circle cx="7" cy="7" r="5" fill="#232323" stroke="#999" stroke-width="2"/></svg>
<svg style="position:absolute;left:1557px;top:837px;" width="14" height="14" viewBox="0 0 14 14"><circle cx="7" cy="7" r="5" fill="#232323" stroke="#999" stroke-width="2"/></svg>
<svg style="position:absolute;left:1512px;top:855px;" width="24" height="18" viewBox="0 0 24 18"><path d="M2 3 l8 6 l-8 6z" fill="#bbb"/><path d="M16 2 v11 a2.5 2.5 0 1 1 -1.5 -2.3 M16 2 l4 3" fill="none" stroke="#bbb" stroke-width="1.6"/></svg>
<svg style="position:absolute;left:1547px;top:853px;" width="22" height="20" viewBox="0 0 22 20"><path d="M2 9 v8 h17 v-8" fill="none" stroke="#ccc" stroke-width="2"/><path d="M7 12 q1 -7 9 -7 l0 -3 l4 4 l-4 4 l0 -3 q-6 0 -9 5" fill="#ccc"/></svg>
<div style="left:1597px;top:206px;width:1193px;height:669px;background:#232323;"></div>
<div class="t" style="left:1612px;top:214.3px;font-size:14.5px;line-height:17.4px;color:#b8b8b8;letter-spacing:1px;">节目: <span style="font-size:13px;letter-spacing:-0.3px">2020-05-08 131003</span></div>
<div class="t" style="left:1776px;top:214.0px;font-size:15px;line-height:18.0px;color:#b8b8b8;">≡</div>
<svg style="position:absolute;left:1965px;top:363px;" width="455" height="256" viewBox="0 0 455 256"><defs><pattern id="chk" width="20" height="20" patternUnits="userSpaceOnUse"><rect width="20" height="20" fill="#f4f4f4"/><rect width="10" height="10" fill="#c8c8c8"/><rect x="10" y="10" width="10" height="10" fill="#c8c8c8"/></pattern><linearGradient id="wall" x1="0" y1="0" x2="0" y2="1"><stop offset="0" stop-color="#877b72"/><stop offset="0.4" stop-color="#7e7168"/><stop offset="0.65" stop-color="#6d6158"/><stop offset="1" stop-color="#6a5e56"/></linearGradient><linearGradient id="tree" x1="0" y1="0" x2="0" y2="1"><stop offset="0" stop-color="#aeb4ac"/><stop offset="0.12" stop-color="#7a866e"/><stop offset="0.3" stop-color="#4a603c"/><stop offset="0.6" stop-color="#304628"/><stop offset="0.75" stop-color="#34442a"/><stop offset="0.8" stop-color="#6a7648"/><stop offset="1" stop-color="#96a070"/></linearGradient><filter id="fb" x="-20%" y="-20%" width="140%" height="140%"><feGaussianBlur stdDeviation="6"/></filter><filter id="fb2"><feGaussianBlur stdDeviation="2.5"/></filter></defs><rect width="455" height="256" fill="url(#chk)"/><path d="M20 0 L455 0 L455 256 L8 256 Z" fill="url(#tree)"/><g filter="url(#fb2)"><ellipse cx="372" cy="14" rx="28" ry="10" fill="#c4c8c0" opacity="0.8"/><ellipse cx="430" cy="40" rx="18" ry="30" fill="#9aa890" opacity="0.7"/><ellipse cx="390" cy="90" rx="30" ry="25" fill="#5a7048" opacity="0.8"/><ellipse cx="410" cy="175" rx="45" ry="18" fill="#283822" opacity="0.8"/><ellipse cx="365" cy="170" rx="12" ry="6" fill="#7a9048" opacity="0.8"/></g><path d="M23 0 L340 0 Q344 60 347 128 Q350 190 354 256 L8 256 Z" fill="url(#wall)"/><g filter="url(#fb)" clip-path="none"><ellipse cx="180" cy="65" rx="110" ry="10" fill="#95897e" opacity="0.7"/><ellipse cx="240" cy="95" rx="90" ry="9" fill="#988b80" opacity="0.6"/><ellipse cx="160" cy="120" rx="80" ry="8" fill="#8e8278" opacity="0.5"/><ellipse cx="290" cy="160" rx="60" ry="12" fill="#786a60" opacity="0.6"/><ellipse cx="190" cy="210" rx="90" ry="25" fill="#625850" opacity="0.6"/><ellipse cx="20" cy="180" rx="14" ry="70" fill="#5e5a56" opacity="0.7"/></g><ellipse cx="391" cy="215" rx="32" ry="7.5" fill="#a8c6c6" opacity="0.9"/><rect x="23" y="13.3" width="410" height="229" fill="none" stroke="#ddd2c6" stroke-width="2"/><rect x="45" y="26.5" width="363.3" height="203.5" fill="none" stroke="#e6dcd0" stroke-width="2"/><rect x="226" y="19" width="3" height="14" fill="#f0e8e0"/><rect x="226" y="223" width="3" height="14" fill="#f0e8e0"/><rect x="37" y="127.5" width="15.5" height="2.5" fill="#f0e8e0"/><rect x="400" y="127.5" width="15" height="2.5" fill="#f0e8e0"/><path d="M47 141 l0 15 l4 -3.5 l3 6 l3 -1.5 l-3 -6 l5 -0.5z" fill="#e040c0" stroke="#3a1030" stroke-width="1"/></svg>
<div class="t" style="left:1619px;top:734.1px;font-size:16.5px;line-height:19.8px;color:#3a8fe4;letter-spacing:-0.2px;-webkit-text-stroke:0.4px #3a8fe4;">00:00:03:07</div>
<div style="left:1743px;top:735px;width:99px;height:18px;background:#1d1d1d;"></div>
<div class="t" style="left:1749px;top:735.8px;font-size:12px;line-height:14.4px;color:#a0a0a0;letter-spacing:-0.5px;">10%</div>
<svg style="position:absolute;left:1826px;top:739px;" width="12" height="10" viewBox="0 0 12 10"><path d="M2 3 l4 4 l4 -4" fill="none" stroke="#999" stroke-width="1.5"/></svg>
<div style="left:2519px;top:735px;width:98px;height:18px;background:#1f1f1f;"></div>
<div class="t" style="left:2524px;top:735.6px;font-size:14px;line-height:16.8px;color:#a8a8a8;letter-spacing:1px;">完整</div>
<svg style="position:absolute;left:2600px;top:739px;" width="12" height="10" viewBox="0 0 12 10"><path d="M2 3 l4 4 l4 -4" fill="none" stroke="#888" stroke-width="1.5"/></svg>
<svg style="position:absolute;left:2631px;top:734px;" width="20" height="20" viewBox="0 0 20 20"><path d="M5 5 a4 4 0 0 0 5 5 l7 7 l2 -2 l-7 -7 a4 4 0 0 0 -5 -5 l2 3 l-1 2 l-2 0z" fill="#d0d0d0"/></svg>
<div class="t" style="left:2664px;top:734.1px;font-size:16.5px;line-height:19.8px;color:#b8b8b8;letter-spacing:-0.2px;-webkit-text-stroke:0.3px #b8b8b8;">00:00:57:14</div>
<svg style="position:absolute;left:1617px;top:768px;" width="1152" height="16" viewBox="0 0 1152 16"><rect x="0.0" y="2" width="1" height="14" fill="#555"/><rect x="10.0" y="11" width="1" height="5" fill="#555"/><rect x="20.0" y="11" width="1" height="5" fill="#555"/><rect x="30.0" y="11" width="1" height="5" fill="#555"/><rect x="40.0" y="11" width="1" height="5" fill="#555"/><rect x="50.0" y="8" width="1" height="8" fill="#555"/><rect x="60.0" y="11" width="1" height="5" fill="#555"/><rect x="70.0" y="11" width="1" height="5" fill="#555"/><rect x="80.0" y="11" width="1" height="5" fill="#555"/><rect x="90.0" y="11" width="1" height="5" fill="#555"/><rect x="100.0" y="2" width="1" height="14" fill="#555"/><rect x="110.0" y="11" width="1" height="5" fill="#555"/><rect x="120.0" y="11" width="1" height="5" fill="#555"/><rect x="130.0" y="11" width="1" height="5" fill="#555"/><rect x="140.0" y="11" width="1" height="5" fill="#555"/><rect x="150.0" y="8" width="1" height="8" fill="#555"/><rect x="160.0" y="11" width="1" height="5" fill="#555"/><rect x="170.0" y="11" width="1" height="5" fill="#555"/><rect x="180.0" y="11" width="1" height="5" fill="#555"/><rect x="190.0" y="11" width="1" height="5" fill="#555"/><rect x="200.0" y="2" width="1" height="14" fill="#555"/><rect x="210.0" y="11" width="1" height="5" fill="#555"/><rect x="220.0" y="11" width="1" height="5" fill="#555"/><rect x="230.0" y="11" width="1" height="5" fill="#555"/><rect x="240.0" y="11" width="1" height="5" fill="#555"/><rect x="250.0" y="8" width="1" height="8" fill="#555"/><rect x="260.0" y="11" width="1" height="5" fill="#555"/><rect x="270.0" y="11" width="1" height="5" fill="#555"/><rect x="280.0" y="11" width="1" height="5" fill="#555"/><rect x="290.0" y="11" width="1" height="5" fill="#555"/><rect x="300.0" y="2" width="1" height="14" fill="#555"/><rect x="310.0" y="11" width="1" height="5" fill="#555"/><rect x="320.0" y="11" width="1" height="5" fill="#555"/><rect x="330.0" y="11" width="1" height="5" fill="#555"/><rect x="340.0" y="11" width="1" height="5" fill="#555"/><rect x="350.0" y="8" width="1" height="8" fill="#555"/><rect x="360.0" y="11" width="1" height="5" fill="#555"/><rect x="370.0" y="11" width="1" height="5" fill="#555"/><rect x="380.0" y="11" width="1" height="5" fill="#555"/><rect x="390.0" y="11" width="1" height="5" fill="#555"/><rect x="400.0" y="2" width="1" height="14" fill="#555"/><rect x="410.0" y="11" width="1" height="5" fill="#555"/><rect x="420.0" y="11" width="1" height="5" fill="#555"/><rect x="430.0" y="11" width="1" height="5" fill="#555"/><rect x="440.0" y="11" width="1" height="5" fill="#555"/><rect x="450.0" y="8" width="1" height="8" fill="#555"/><rect x="460.0" y="11" width="1" height="5" fill="#555"/><rect x="470.0" y="11" width="1" height="5" fill="#555"/><rect x="480.0" y="11" width="1" height="5" fill="#555"/><rect x="490.0" y="11" width="1" height="5" fill="#555"/><rect x="500.0" y="2" width="1" height="14" fill="#555"/><rect x="510.0" y="11" width="1" height="5" fill="#555"/><rect x="520.0" y="11" width="1" height="5" fill="#555"/><rect x="530.0" y="11" width="1" height="5" fill="#555"/><rect x="540.0" y="11" width="1" height="5" fill="#555"/><rect x="550.0" y="8" width="1" height="8" fill="#555"/><rect x="560.0" y="11" width="1" height="5" fill="#555"/><rect x="570.0" y="11" width="1" height="5" fill="#555"/><rect x="580.0" y="11" width="1" height="5" fill="#555"/><rect x="590.0" y="11" width="1" height="5" fill="#555"/><rect x="600.0" y="2" width="1" height="14" fill="#555"/><rect x="610.0" y="11" width="1" height="5" fill="#555"/><rect x="620.0" y="11" width="1" height="5" fill="#555"/><rect x="630.0" y="11" width="1" height="5" fill="#555"/><rect x="640.0" y="11" width="1" height="5" fill="#555"/><rect x="650.0" y="8" width="1" height="8" fill="#555"/><rect x="660.0" y="11" width="1" height="5" fill="#555"/><rect x="670.0" y="11" width="1" height="5" fill="#555"/><rect x="680.0" y="11" width="1" height="5" fill="#555"/><rect x="690.0" y="11" width="1" height="5" fill="#555"/><rect x="700.0" y="2" width="1" height="14" fill="#555"/><rect x="710.0" y="11" width="1" height="5" fill="#555"/><rect x="720.0" y="11" width="1" height="5" fill="#555"/><rect x="730.0" y="11" width="1" height="5" fill="#555"/><rect x="740.0" y="11" width="1" height="5" fill="#555"/><rect x="750.0" y="8" width="1" height="8" fill="#555"/><rect x="760.0" y="11" width="1" height="5" fill="#555"/><rect x="770.0" y="11" width="1" height="5" fill="#555"/><rect x="780.0" y="11" width="1" height="5" fill="#555"/><rect x="790.0" y="11" width="1" height="5" fill="#555"/><rect x="800.0" y="2" width="1" height="14" fill="#555"/><rect x="810.0" y="11" width="1" height="5" fill="#555"/><rect x="820.0" y="11" width="1" height="5" fill="#555"/><rect x="830.0" y="11" width="1" height="5" fill="#555"/><rect x="840.0" y="11" width="1" height="5" fill="#555"/><rect x="850.0" y="8" width="1" height="8" fill="#555"/><rect x="860.0" y="11" width="1" height="5" fill="#555"/><rect x="870.0" y="11" width="1" height="5" fill="#555"/><rect x="880.0" y="11" width="1" height="5" fill="#555"/><rect x="890.0" y="11" width="1" height="5" fill="#555"/><rect x="900.0" y="2" width="1" height="14" fill="#555"/><rect x="910.0" y="11" width="1" height="5" fill="#555"/><rect x="920.0" y="11" width="1" height="5" fill="#555"/><rect x="930.0" y="11" width="1" height="5" fill="#555"/><rect x="940.0" y="11" width="1" height="5" fill="#555"/><rect x="950.0" y="8" width="1" height="8" fill="#555"/><rect x="960.0" y="11" width="1" height="5" fill="#555"/><rect x="970.0" y="11" width="1" height="5" fill="#555"/><rect x="980.0" y="11" width="1" height="5" fill="#555"/><rect x="990.0" y="11" width="1" height="5" fill="#555"/><rect x="1000.0" y="2" width="1" height="14" fill="#555"/><rect x="1010.0" y="11" width="1" height="5" fill="#555"/><rect x="1020.0" y="11" width="1" height="5" fill="#555"/><rect x="1030.0" y="11" width="1" height="5" fill="#555"/><rect x="1040.0" y="11" width="1" height="5" fill="#555"/><rect x="1050.0" y="8" width="1" height="8" fill="#555"/><rect x="1060.0" y="11" width="1" height="5" fill="#555"/><rect x="1070.0" y="11" width="1" height="5" fill="#555"/><rect x="1080.0" y="11" width="1" height="5" fill="#555"/><rect x="1090.0" y="11" width="1" height="5" fill="#555"/><rect x="1100.0" y="2" width="1" height="14" fill="#555"/><rect x="1110.0" y="11" width="1" height="5" fill="#555"/><rect x="1120.0" y="11" width="1" height="5" fill="#555"/><rect x="1130.0" y="11" width="1" height="5" fill="#555"/><rect x="1140.0" y="11" width="1" height="5" fill="#555"/><rect x="1150.0" y="8" width="1" height="8" fill="#555"/></svg>
<div style="left:1620px;top:788px;width:1146px;height:5px;background:#2c2c2c;"></div>
<svg style="position:absolute;left:1612px;top:782px;" width="16" height="16" viewBox="0 0 16 16"><circle cx="8" cy="8" r="5" fill="#232323" stroke="#9a9a9a" stroke-width="2"/></svg>
<svg style="position:absolute;left:2758px;top:782px;" width="16" height="16" viewBox="0 0 16 16"><circle cx="8" cy="8" r="5" fill="#232323" stroke="#9a9a9a" stroke-width="2"/></svg>
<svg style="position:absolute;left:1670px;top:767px;" width="16" height="16" viewBox="0 0 16 16"><path d="M1 1 h13 v9 l-6.5 5 l-6.5 -5z" fill="#3a8ee8"/></svg>
<svg style="position:absolute;left:1964px;top:811px;" width="20" height="19" viewBox="0 0 20 19"><path d="M3 3 h12 v8 l-6 5 l-6 -5z" fill="#c8c8c8"/></svg>
<svg style="position:absolute;left:2008px;top:811px;" width="20" height="19" viewBox="0 0 20 19"><path d="M11 2 q-4 0 -4 3 v3 l-3 1 l3 1 v3 q0 3 4 3" fill="none" stroke="#c8c8c8" stroke-width="1.8"/></svg>
<svg style="position:absolute;left:2046px;top:811px;" width="20" height="19" viewBox="0 0 20 19"><path d="M7 2 q4 0 4 3 v3 l3 1 l-3 1 v3 q0 3 -4 3" fill="none" stroke="#c8c8c8" stroke-width="1.8"/></svg>
<svg style="position:absolute;left:2099px;top:811px;" width="20" height="19" viewBox="0 0 20 19"><path d="M5 2 q-3 0 -3 3 v3 l-2 1 l2 1 v3 q0 3 3 3" fill="none" stroke="#c8c8c8" stroke-width="1.6"/><path d="M17 9 h-10 M11 5 l-4 4 l4 4" fill="none" stroke="#c8c8c8" stroke-width="2"/></svg>
<svg style="position:absolute;left:2140px;top:811px;" width="20" height="19" viewBox="0 0 20 19"><path d="M13 3 l-9 6 l9 6z" fill="#c8c8c8"/><rect x="14" y="3" width="2" height="12" fill="#c8c8c8"/></svg>
<svg style="position:absolute;left:2181px;top:811px;" width="20" height="19" viewBox="0 0 20 19"><path d="M5 2 l12 7 l-12 7z" fill="#c8c8c8"/></svg>
<svg style="position:absolute;left:2222px;top:811px;" width="20" height="19" viewBox="0 0 20 19"><rect x="3" y="3" width="2" height="12" fill="#c8c8c8"/><path d="M6 3 l9 6 l-9 6z" fill="#c8c8c8"/></svg>
<svg style="position:absolute;left:2263px;top:811px;" width="20" height="19" viewBox="0 0 20 19"><path d="M1 9 h10 M7 5 l4 4 l-4 4" fill="none" stroke="#c8c8c8" stroke-width="2"/><path d="M13 2 q3 0 3 3 v3 l2 1 l-2 1 v3 q0 3 -3 3" fill="none" stroke="#c8c8c8" stroke-width="1.6"/></svg>
<svg style="position:absolute;left:2314px;top:811px;" width="20" height="19" viewBox="0 0 20 19"><rect x="1" y="9" width="7" height="7" fill="#c8c8c8"/><rect x="12" y="9" width="7" height="7" fill="#c8c8c8"/><rect x="6" y="3" width="8" height="7" fill="none" stroke="#c8c8c8" stroke-width="1.6"/></svg>
<svg style="position:absolute;left:2356px;top:811px;" width="20" height="19" viewBox="0 0 20 19"><rect x="1" y="9" width="6" height="7" fill="none" stroke="#c8c8c8" stroke-width="1.6"/><rect x="13" y="9" width="6" height="7" fill="none" stroke="#c8c8c8" stroke-width="1.6"/><rect x="6" y="3" width="8" height="8" fill="none" stroke="#c8c8c8" stroke-width="1.6"/></svg>
<svg style="position:absolute;left:2398px;top:811px;" width="20" height="19" viewBox="0 0 20 19"><path d="M2 6 h4 l2 -3 h4 l2 3 h4 v10 h-16z" fill="#c8c8c8"/><circle cx="10" cy="11" r="3.2" fill="#232323"/></svg>
<svg style="position:absolute;left:2439px;top:811px;" width="20" height="19" viewBox="0 0 20 19"><rect x="2" y="2" width="10" height="9" fill="#c8c8c8"/><rect x="8" y="8" width="10" height="9" fill="none" stroke="#c8c8c8" stroke-width="1.6"/></svg>
<div style="left:2138px;top:841px;width:24px;height:18px;border:2px solid #3a8ee8;background:#1b2a3a;"></div>
<div style="left:2142px;top:845px;width:16px;height:10px;background:#232323;border:1.5px solid #3a8ee8;"></div>
<svg style="position:absolute;left:2181px;top:840px;" width="20" height="20" viewBox="0 0 20 20"><rect x="2" y="2" width="11" height="10" fill="none" stroke="#c8c8c8" stroke-width="1.6"/><rect x="7" y="7" width="11" height="10" fill="#c8c8c8"/><rect x="9" y="9" width="4" height="4" fill="#232323"/></svg>
<svg style="position:absolute;left:2742px;top:844px;" width="16" height="16" viewBox="0 0 16 16"><path d="M8 2 v12 M2 8 h12" stroke="#c8c8c8" stroke-width="2.6"/></svg>
<div style="left:514px;top:875px;width:2276px;height:6px;background:#161616;"></div>
<div style="left:514px;top:881px;width:666px;height:478px;background:#232323;"></div>
<div style="left:1180px;top:881px;width:2px;height:478px;background:#161616;"></div>
<div class="t" style="left:531px;top:887.3px;font-size:14.5px;line-height:17.4px;color:#c8c8c8;letter-spacing:1.5px;">项目: 未命名</div>
<div class="t" style="left:626px;top:888.0px;font-size:15px;line-height:18.0px;color:#c8c8c8;">≡</div>
<div style="left:529px;top:909px;width:110px;height:3px;background:#c9c9c9;"></div>
<div class="t" style="left:666px;top:887.3px;font-size:14.5px;line-height:17.4px;color:#8a8a8a;letter-spacing:2px;">媒体浏览器</div>
<div class="t" style="left:796px;top:887.3px;font-size:14.5px;line-height:17.4px;color:#8a8a8a;letter-spacing:2px;">库</div>
<div class="t" style="left:861px;top:887.3px;font-size:14.5px;line-height:17.4px;color:#8a8a8a;letter-spacing:2px;">信息</div>
<div class="t" style="left:942px;top:887.3px;font-size:14.5px;line-height:17.4px;color:#8a8a8a;letter-spacing:2px;">效果</div>
<div class="t" style="left:1023px;top:887.3px;font-size:14.5px;line-height:17.4px;color:#8a8a8a;letter-spacing:2px;">标记</div>
<div class="t" style="left:1107px;top:887.3px;font-size:14.5px;line-height:17.4px;color:#8a8a8a;letter-spacing:2px;">历史</div>
<div class="t" style="left:1161px;top:883.0px;font-size:20px;line-height:24.0px;color:#cfcfcf;font-weight:bold;">»</div>
<svg style="position:absolute;left:530px;top:926px;" width="20" height="15" viewBox="0 0 20 15"><path d="M1 3 h6 l2 2 h10 v9 h-18z" fill="#555"/><rect x="5" y="7" width="8" height="5" fill="#3a3a3a"/></svg>
<div class="t" style="left:566px;top:924.6px;font-size:14px;line-height:16.8px;color:#7a7a7a;letter-spacing:0px;">未命名.prproj</div>
<div style="left:534px;top:953px;width:232px;height:22px;background:#1a1a1a;"></div>
<svg style="position:absolute;left:538px;top:956px;" width="18" height="17" viewBox="0 0 18 17"><circle cx="11" cy="6" r="4.2" fill="none" stroke="#ccc" stroke-width="1.8"/><path d="M8 9 l-5 5" stroke="#ccc" stroke-width="2.2"/></svg>
<svg style="position:absolute;left:787px;top:954px;" width="22" height="18" viewBox="0 0 22 18"><path d="M1 3 h6 l2 2 h11 v11 h-19z" fill="#d0d0d0"/><path d="M8 8 v5 M8 8 h3 a1.5 1.5 0 0 1 0 3 h-3" stroke="#555" stroke-width="1.3" fill="none"/></svg>
<div class="t" style="right:2034px;top:955.9px;font-size:13.5px;line-height:16.2px;color:#8a8a8a;letter-spacing:1px;">1 项已选择，共 3 项</div>
<div style="left:532px;top:990px;width:632px;height:322px;border:1px solid #2a2a2a;background:#222;"></div>
<svg style="position:absolute;left:544px;top:1001px;" width="185" height="104" viewBox="0 0 185 104"><defs><linearGradient id="sky1" x1="0" y1="0" x2="0" y2="1"><stop offset="0" stop-color="#dcdad8"/><stop offset="0.5" stop-color="#e2d6d0"/></linearGradient><linearGradient id="rd1" x1="0" y1="0" x2="0" y2="1"><stop offset="0" stop-color="#a8a4a2"/><stop offset="1" stop-color="#c4bcba"/></linearGradient><filter id="bl1"><feGaussianBlur stdDeviation="0.8"/></filter></defs><g filter="url(#bl1)"><rect width="185" height="104" fill="url(#sky1)"/><rect x="12" y="14" width="16" height="32" fill="#d8b8a4"/><rect x="27" y="24" width="8" height="22" fill="#c8aca0"/><rect x="34" y="28" width="6" height="18" fill="#cbb5ac"/><rect x="57" y="30" width="10" height="16" fill="#d4b0a4"/><rect x="46" y="43" width="25" height="6" fill="#c8c0bc"/><rect x="90" y="21" width="7" height="27" fill="#a8a8b0"/><rect x="96" y="20" width="14" height="28" fill="#d8a860"/><path d="M112 48 q2 -30 10 -30 q8 0 6 30z" fill="#3a3a30"/><rect x="0" y="30" width="14" height="28" fill="#707060" opacity="0.7"/><rect x="33" y="46" width="105" height="13" fill="#4c5444"/><rect x="34" y="53" width="60" height="5" fill="#9a9890"/><path d="M0 57 L140 58 L185 60 L185 104 L0 104z" fill="url(#rd1)"/><path d="M96 104 Q96 72 118 66 L185 60 L185 104z" fill="#7c8450"/><path d="M112 78 Q118 66 140 64 L185 62 L185 92 Q150 84 122 84z" fill="#4c5a30"/><path d="M130 66 Q132 20 160 8 L185 0 L185 70 Q160 72 130 66z" fill="#2e3a28"/><path d="M120 40 q10 -25 30 -30 q10 0 8 25z" fill="#384530"/><path d="M172 104 Q168 80 185 56 L185 104z" fill="#b8bcc0" opacity="0.8"/><path d="M0 104 L20 94 L0 100z" fill="#d0d0d0"/></g></svg>
<svg style="position:absolute;left:756px;top:1001px;" width="184" height="104" viewBox="0 0 184 104"><defs><linearGradient id="sky2" x1="0" y1="0" x2="0" y2="1"><stop offset="0" stop-color="#dcdad8"/><stop offset="0.5" stop-color="#e2d6d0"/></linearGradient><linearGradient id="rd2" x1="0" y1="0" x2="0" y2="1"><stop offset="0" stop-color="#a8a4a2"/><stop offset="1" stop-color="#c4bcba"/></linearGradient><filter id="bl2"><feGaussianBlur stdDeviation="0.8"/></filter></defs><g filter="url(#bl2)"><rect width="184" height="104" fill="url(#sky2)"/><rect x="12" y="14" width="16" height="32" fill="#d8b8a4"/><rect x="27" y="24" width="8" height="22" fill="#c8aca0"/><rect x="34" y="28" width="6" height="18" fill="#cbb5ac"/><rect x="57" y="30" width="10" height="16" fill="#d4b0a4"/><rect x="46" y="43" width="25" height="6" fill="#c8c0bc"/><rect x="90" y="21" width="7" height="27" fill="#a8a8b0"/><rect x="96" y="20" width="14" height="28" fill="#d8a860"/><path d="M112 48 q2 -30 10 -30 q8 0 6 30z" fill="#3a3a30"/><rect x="0" y="30" width="14" height="28" fill="#707060" opacity="0.7"/><rect x="33" y="46" width="105" height="13" fill="#4c5444"/><rect x="34" y="53" width="60" height="5" fill="#9a9890"/><path d="M0 57 L140 58 L184 60 L184 104 L0 104z" fill="url(#rd2)"/><path d="M96 104 Q96 72 118 66 L184 60 L184 104z" fill="#7c8450"/><path d="M112 78 Q118 66 140 64 L184 62 L184 92 Q150 84 122 84z" fill="#4c5a30"/><path d="M130 66 Q132 20 160 8 L184 0 L184 70 Q160 72 130 66z" fill="#2e3a28"/><path d="M120 40 q10 -25 30 -30 q10 0 8 25z" fill="#384530"/><path d="M172 104 Q168 80 184 56 L184 104z" fill="#b8bcc0" opacity="0.8"/><path d="M0 104 L20 94 L0 100z" fill="#d0d0d0"/></g></svg>
<div style="left:756px;top:1001px;width:5px;height:104px;background:#111;"></div>
<div style="left:954px;top:990px;width:210px;height:155px;background:#8d8d8d;"></div>
<svg style="position:absolute;left:965px;top:1001px;" width="188" height="106" viewBox="0 0 188 106"><defs><linearGradient id="c3" x1="0" y1="0" x2="1" y2="0"><stop offset="0" stop-color="#8a9aa4"/><stop offset="0.6" stop-color="#6e8894"/><stop offset="1" stop-color="#5a86a8"/></linearGradient><filter id="bl3"><feGaussianBlur stdDeviation="1"/></filter></defs><g filter="url(#bl3)"><rect width="188" height="106" fill="url(#c3)"/><path d="M120 0 L188 0 L188 40 Q150 30 120 0z" fill="#6898c0"/><rect x="0" y="0" width="110" height="40" fill="#9aa8b0"/><rect x="0" y="40" width="30" height="50" fill="#b4bec4"/><rect x="30" y="30" width="15" height="15" fill="#d0d8dc"/><rect x="58" y="25" width="30" height="30" fill="#9aa6ac"/><rect x="98" y="10" width="35" height="55" fill="#d4dce2"/><path d="M40 45 Q60 30 90 50 L80 75 L40 80z" fill="#3e5448"/><path d="M0 80 L0 106 L60 106 L50 80z" fill="#4a6a4c"/><path d="M60 106 L110 70 L140 62 L188 50 L188 80 L150 106z" fill="#586a64"/><path d="M130 45 L188 35 L188 70 L140 62z" fill="#4e6a62"/><path d="M0 82 L85 45 L100 40" stroke="#b8c4c8" stroke-width="4" fill="none"/><path d="M18 84 v16 M37 76 v14 M55 68 v14 M72 60 v12" stroke="#b0bcc0" stroke-width="3"/><path d="M90 106 Q140 60 188 48" stroke="#c4ccd0" stroke-width="5" fill="none"/><path d="M115 106 Q150 72 188 60" stroke="#a8b4b8" stroke-width="3" fill="none"/><path d="M95 70 l40 -16 l-8 18z" fill="#dfe6ea"/><path d="M60 90 l40 -20" stroke="#8a7a88" stroke-width="5"/></g></svg>
<div style="left:689px;top:1089px;width:18px;height:15px;background:#1a5aa0;border:1px solid #2a7ad0;"></div>
<div style="left:709px;top:1089px;width:18px;height:15px;background:#1a5aa0;border:1px solid #2a7ad0;"></div>
<div style="left:921px;top:1089px;width:18px;height:15px;background:#1a5aa0;border:1px solid #2a7ad0;"></div>
<div style="left:1113px;top:1089px;width:18px;height:15px;background:#1a5aa0;border:1px solid #2a7ad0;"></div>
<div style="left:1133px;top:1089px;width:18px;height:15px;background:#1a5aa0;border:1px solid #2a7ad0;"></div>
<div class="t" style="left:544px;top:1117.8px;font-size:12px;line-height:14.4px;color:#9a9a9a;letter-spacing:-0.4px;">2020-05-08 131003.mov</div>
<div class="t" style="right:2471px;top:1117.8px;font-size:12px;line-height:14.4px;color:#9a9a9a;letter-spacing:-0.3px;">5:10</div>
<div class="t" style="left:757px;top:1117.8px;font-size:12px;line-height:14.4px;color:#9a9a9a;letter-spacing:-0.4px;">2020-05-08 131003</div>
<div class="t" style="right:2260px;top:1117.8px;font-size:12px;line-height:14.4px;color:#9a9a9a;letter-spacing:-0.3px;">57:14</div>
<div class="t" style="left:965px;top:1116.9px;font-size:13.5px;line-height:16.2px;color:#303030;letter-spacing:1.2px;">4K重庆轻轨穿楼<span style="font-size:12px;letter-spacing:-0.5px">.mov</span></div>
<div class="t" style="right:2048px;top:1117.8px;font-size:12px;line-height:14.4px;color:#3a3a3a;letter-spacing:-0.3px;">57:18</div>
<svg style="position:absolute;left:530px;top:1326px;" width="18" height="18" viewBox="0 0 18 18"><path d="M5 8 v-3 a4 4 0 0 1 8 0" fill="none" stroke="#2fa84a" stroke-width="2"/><rect x="3" y="8" width="12" height="9" fill="#2fa84a"/></svg>
<svg style="position:absolute;left:566px;top:1327px;" width="20" height="16" viewBox="0 0 20 16"><rect x="1" y="2" width="5" height="5" fill="#ccc"/><rect x="1" y="10" width="5" height="5" fill="#ccc"/><rect x="9" y="3" width="10" height="2.5" fill="#999"/><rect x="9" y="11" width="10" height="2.5" fill="#999"/></svg>
<svg style="position:absolute;left:601px;top:1326px;" width="20" height="18" viewBox="0 0 20 18"><rect x="2" y="2" width="15" height="11" fill="#3a8ee8"/><rect x="2" y="15" width="15" height="2" fill="#3a8ee8"/></svg>
<svg style="position:absolute;left:636px;top:1326px;" width="24" height="18" viewBox="0 0 24 18"><rect x="2" y="2" width="9" height="8" fill="#bbb"/><rect x="7" y="6" width="9" height="8" fill="#ccc" stroke="#232323"/><rect x="12" y="9" width="10" height="8" fill="#ddd" stroke="#232323"/></svg>
<svg style="position:absolute;left:671px;top:1327px;" width="16" height="16" viewBox="0 0 16 16"><circle cx="8" cy="8" r="5" fill="none" stroke="#bbb" stroke-width="2.2"/></svg>
<div style="left:687px;top:1334px;width:65px;height:2px;background:#3a3a3a;"></div>
<svg style="position:absolute;left:776px;top:1326px;" width="20" height="18" viewBox="0 0 20 18"><rect x="2" y="2" width="16" height="2.5" fill="#ccc"/><rect x="2" y="7" width="13" height="2.5" fill="#ccc"/><rect x="2" y="12" width="10" height="2.5" fill="#ccc"/><rect x="2" y="16" width="12" height="2" fill="#ccc"/></svg>
<svg style="position:absolute;left:806px;top:1329px;" width="12" height="10" viewBox="0 0 12 10"><path d="M2 3 l4 4 l4 -4" fill="none" stroke="#888" stroke-width="1.5"/></svg>
<svg style="position:absolute;left:990px;top:1327px;" width="22" height="16" viewBox="0 0 22 16"><rect x="1" y="4" width="6" height="9" fill="#bbb"/><rect x="8" y="4" width="6" height="9" fill="#bbb"/><rect x="15" y="6" width="5" height="7" fill="#999"/></svg>
<svg style="position:absolute;left:1026px;top:1326px;" width="18" height="18" viewBox="0 0 18 18"><circle cx="11" cy="7" r="5" fill="none" stroke="#bbb" stroke-width="1.8"/><path d="M7.5 10.5 l-5 5" stroke="#bbb" stroke-width="2.2"/></svg>
<svg style="position:absolute;left:1061px;top:1326px;" width="20" height="18" viewBox="0 0 20 18"><path d="M1 4 h6 l2 2 h10 v10 h-18z" fill="#c8c8c8"/></svg>
<svg style="position:absolute;left:1097px;top:1326px;" width="20" height="18" viewBox="0 0 20 18"><path d="M4 2 h12 v13 h-5 v-5 h-7z" fill="#c8c8c8"/><rect x="3" y="10" width="6" height="6" fill="none" stroke="#c8c8c8" stroke-width="1.2"/></svg>
<svg style="position:absolute;left:1133px;top:1325px;" width="18" height="20" viewBox="0 0 18 20"><rect x="3" y="5" width="12" height="13" fill="none" stroke="#bbb" stroke-width="1.8"/><rect x="1" y="3" width="16" height="2" fill="#bbb"/><rect x="7" y="1" width="4" height="2" fill="#bbb"/><path d="M7 8 v7 M11 8 v7" stroke="#bbb" stroke-width="1.3"/></svg>
<div style="left:514px;top:1359px;width:2276px;height:25px;background:#252525;"></div>
<div style="left:514px;top:1358px;width:2276px;height:1px;background:#1a1a1a;"></div>
<svg style="position:absolute;left:517px;top:1362px;" width="20" height="16" viewBox="0 0 20 16"><path d="M6 13 a5 5 0 0 1 0 -10 a6 6 0 0 1 9 2 a4 4 0 0 1 0 8z" fill="none" stroke="#777" stroke-width="1.8"/></svg>
<div style="left:2787px;top:1350px;width:3px;height:34px;background:#f0f0f0;"></div>
<div style="left:1182px;top:881px;width:61px;height:478px;background:#232323;"></div>
<div style="left:1198px;top:902px;width:30px;height:27px;background:#151515;"></div>
<svg style="position:absolute;left:1201px;top:905px;" width="22" height="22" viewBox="0 0 22 22"><path d="M6 2 l14 9 l-7 1 l-4 7z" fill="#3a8ee8"/></svg>
<svg style="position:absolute;left:1201px;top:935px;" width="22" height="22" viewBox="0 0 22 22"><path d="M2 4 h3 M7 4 h3 M2 14 h3 M7 14 h3 M2 9 h2" stroke="#c8c8c8" stroke-width="1.6"/><path d="M8 7 h8 v-3 l5 5 l-5 5 v-3 h-8z" fill="#c8c8c8"/></svg>
<svg style="position:absolute;left:1201px;top:967px;" width="22" height="22" viewBox="0 0 22 22"><path d="M11 2 v18" stroke="#c8c8c8" stroke-width="2"/><path d="M1 11 l5 -4 v8z M21 11 l-5 -4 v8z" fill="#c8c8c8"/><path d="M6 11 h10" stroke="#c8c8c8" stroke-width="1.6"/></svg>
<svg style="position:absolute;left:1201px;top:1000px;" width="22" height="22" viewBox="0 0 22 22"><path d="M4 10 l7 -7 l8 8 l-7 7z" fill="#c8c8c8"/><path d="M8 11 l4 -4" stroke="#232323" stroke-width="1.5"/></svg>
<svg style="position:absolute;left:1201px;top:1032px;" width="22" height="22" viewBox="0 0 22 22"><path d="M3 3 v16 M19 3 v16" stroke="#c8c8c8" stroke-width="2"/><path d="M6 11 h10 M6 11 l3 -3 M6 11 l3 3 M16 11 l-3 -3 M16 11 l-3 3" stroke="#c8c8c8" stroke-width="1.6" fill="none"/></svg>
<svg style="position:absolute;left:1201px;top:1064px;" width="22" height="22" viewBox="0 0 22 22"><path d="M3 19 l2 -7 l8 -8 l5 5 l-8 8z" fill="#c8c8c8"/><path d="M3 19 l5 -5" stroke="#232323" stroke-width="1.3"/></svg>
<svg style="position:absolute;left:1201px;top:1094px;" width="22" height="22" viewBox="0 0 22 22"><path d="M5 12 v-6 a1.3 1.3 0 0 1 2.6 0 v4 v-7 a1.3 1.3 0 0 1 2.6 0 v7 v-6 a1.3 1.3 0 0 1 2.6 0 v6 v-4 a1.3 1.3 0 0 1 2.6 0 v8 q0 6 -6 6 q-4 0 -6 -4 l-3 -5 a1.3 1.3 0 0 1 2 -1z" fill="#c8c8c8"/></svg>
<svg style="position:absolute;left:1201px;top:1128px;" width="22" height="22" viewBox="0 0 22 22"><path d="M3 3 h16 v4 h-2 v-2 h-5 v14 h3 v2 h-8 v-2 h3 v-14 h-5 v2 h-2z" fill="#c8c8c8"/></svg>
<svg style="position:absolute;left:1218px;top:951px;" width="6" height="6" viewBox="0 0 6 6"><path d="M5 0 v5 h-5z" fill="#888"/></svg>
<svg style="position:absolute;left:1218px;top:983px;" width="6" height="6" viewBox="0 0 6 6"><path d="M5 0 v5 h-5z" fill="#888"/></svg>
<svg style="position:absolute;left:1218px;top:1048px;" width="6" height="6" viewBox="0 0 6 6"><path d="M5 0 v5 h-5z" fill="#888"/></svg>
<svg style="position:absolute;left:1218px;top:1080px;" width="6" height="6" viewBox="0 0 6 6"><path d="M5 0 v5 h-5z" fill="#888"/></svg>
<div style="left:1245px;top:881px;width:1414px;height:478px;background:#212121;border:2px solid #385c88;"></div>
<div class="t" style="left:1256px;top:888.6px;font-size:14px;line-height:16.8px;color:#888;">×</div>
<div class="t" style="left:1279px;top:888.9px;font-size:13.5px;line-height:16.2px;color:#c8c8c8;letter-spacing:-0.3px;">2020-05-08 131003</div>
<div class="t" style="left:1402px;top:888.0px;font-size:15px;line-height:18.0px;color:#c8c8c8;">≡</div>
<div class="t" style="left:1266px;top:916.8px;font-size:19.5px;line-height:23.4px;color:#3a8fe4;letter-spacing:-0.3px;-webkit-text-stroke:0.5px #3a8fe4;">00:00:03:08</div>
<svg style="position:absolute;left:1270px;top:946px;" width="20" height="18" viewBox="0 0 20 18"><path d="M10 2 v14 M3 9 h14 M5 4 l10 10 M15 4 l-10 10" stroke="#3a8ee8" stroke-width="1.8"/><circle cx="10" cy="9" r="3" fill="#1f1f1f"/></svg>
<svg style="position:absolute;left:1311px;top:945px;" width="18" height="20" viewBox="0 0 18 20"><path d="M3 17 v-8 a6 6 0 0 1 12 0 v8" fill="none" stroke="#3a8ee8" stroke-width="3.5"/></svg>
<svg style="position:absolute;left:1350px;top:945px;" width="22" height="20" viewBox="0 0 22 20"><rect x="1" y="1" width="18" height="14" fill="none" stroke="#3a8ee8" stroke-width="1.5" stroke-dasharray="3 2"/><path d="M8 4 l10 7 l-5 1 l-2 6z" fill="#3a8ee8"/></svg>
<svg style="position:absolute;left:1394px;top:947px;" width="16" height="16" viewBox="0 0 16 16"><path d="M2 2 h12 v8 l-6 5 l-6 -5z" fill="#ccc"/></svg>
<svg style="position:absolute;left:1431px;top:945px;" width="22" height="22" viewBox="0 0 22 22"><path d="M4 4 a4.5 4.5 0 0 0 6 6 l8 8 l2.5 -2.5 l-8 -8 a4.5 4.5 0 0 0 -6 -6 l2.5 3 l-1 2.5 l-2.5 0z" fill="#ccc"/></svg>
<div style="left:1247px;top:1055px;width:1378px;height:1px;background:#2a2a2a;"></div>
<div style="left:1525px;top:971px;width:2px;height:385px;background:#262626;"></div>
<div style="left:1247px;top:1086px;width:1378px;height:1px;background:#262626;"></div>
<div style="left:1247px;top:1115px;width:1378px;height:1px;background:#262626;"></div>
<div style="left:1247px;top:1144px;width:1378px;height:1px;background:#262626;"></div>
<div style="left:1247px;top:1180px;width:1378px;height:1px;background:#262626;"></div>
<div style="left:1247px;top:1209px;width:1378px;height:1px;background:#262626;"></div>
<div style="left:1247px;top:1238px;width:1378px;height:1px;background:#262626;"></div>
<svg style="position:absolute;left:1303px;top:1064px;" width="14" height="16" viewBox="0 0 14 16"><path d="M4 7 v-2.5 a3 3 0 0 1 6 0" fill="none" stroke="#c0c0c0" stroke-width="1.6"/><rect x="2.5" y="7" width="9.5" height="8" fill="#c0c0c0"/><rect x="6.3" y="9.5" width="2" height="3" fill="#232323"/></svg>
<svg style="position:absolute;left:1368px;top:1065px;" width="18" height="14" viewBox="0 0 18 14"><rect x="1.5" y="1.5" width="10" height="11" fill="none" stroke="#c0c0c0" stroke-width="1.6"/><path d="M1.5 7 h10" stroke="#c0c0c0" stroke-width="1.3"/><path d="M11.5 4 l5 2 v2.5 l-5 2" fill="#c0c0c0"/></svg>
<svg style="position:absolute;left:1303px;top:1093px;" width="14" height="16" viewBox="0 0 14 16"><path d="M4 7 v-2.5 a3 3 0 0 1 6 0" fill="none" stroke="#c0c0c0" stroke-width="1.6"/><rect x="2.5" y="7" width="9.5" height="8" fill="#c0c0c0"/><rect x="6.3" y="9.5" width="2" height="3" fill="#232323"/></svg>
<svg style="position:absolute;left:1368px;top:1094px;" width="18" height="14" viewBox="0 0 18 14"><rect x="1.5" y="1.5" width="10" height="11" fill="none" stroke="#c0c0c0" stroke-width="1.6"/><path d="M1.5 7 h10" stroke="#c0c0c0" stroke-width="1.3"/><path d="M11.5 4 l5 2 v2.5 l-5 2" fill="#c0c0c0"/></svg>
<svg style="position:absolute;left:1303px;top:1122px;" width="14" height="16" viewBox="0 0 14 16"><path d="M4 7 v-2.5 a3 3 0 0 1 6 0" fill="none" stroke="#c0c0c0" stroke-width="1.6"/><rect x="2.5" y="7" width="9.5" height="8" fill="#c0c0c0"/><rect x="6.3" y="9.5" width="2" height="3" fill="#232323"/></svg>
<svg style="position:absolute;left:1368px;top:1124px;" width="18" height="14" viewBox="0 0 18 14"><rect x="1.5" y="1.5" width="10" height="11" fill="none" stroke="#c0c0c0" stroke-width="1.6"/><path d="M1.5 7 h10" stroke="#c0c0c0" stroke-width="1.3"/><path d="M11.5 4 l5 2 v2.5 l-5 2" fill="#c0c0c0"/></svg>
<svg style="position:absolute;left:1303px;top:1158px;" width="14" height="16" viewBox="0 0 14 16"><path d="M4 7 v-2.5 a3 3 0 0 1 6 0" fill="none" stroke="#c0c0c0" stroke-width="1.6"/><rect x="2.5" y="7" width="9.5" height="8" fill="#c0c0c0"/><rect x="6.3" y="9.5" width="2" height="3" fill="#232323"/></svg>
<svg style="position:absolute;left:1368px;top:1159px;" width="18" height="14" viewBox="0 0 18 14"><rect x="1.5" y="1.5" width="10" height="11" fill="none" stroke="#c0c0c0" stroke-width="1.6"/><path d="M1.5 7 h10" stroke="#c0c0c0" stroke-width="1.3"/><path d="M11.5 4 l5 2 v2.5 l-5 2" fill="#c0c0c0"/></svg>
<svg style="position:absolute;left:1303px;top:1187px;" width="14" height="16" viewBox="0 0 14 16"><path d="M4 7 v-2.5 a3 3 0 0 1 6 0" fill="none" stroke="#c0c0c0" stroke-width="1.6"/><rect x="2.5" y="7" width="9.5" height="8" fill="#c0c0c0"/><rect x="6.3" y="9.5" width="2" height="3" fill="#232323"/></svg>
<svg style="position:absolute;left:1368px;top:1188px;" width="18" height="14" viewBox="0 0 18 14"><rect x="1.5" y="1.5" width="10" height="11" fill="none" stroke="#c0c0c0" stroke-width="1.6"/><path d="M1.5 7 h10" stroke="#c0c0c0" stroke-width="1.3"/><path d="M11.5 4 l5 2 v2.5 l-5 2" fill="#c0c0c0"/></svg>
<svg style="position:absolute;left:1303px;top:1216px;" width="14" height="16" viewBox="0 0 14 16"><path d="M4 7 v-2.5 a3 3 0 0 1 6 0" fill="none" stroke="#c0c0c0" stroke-width="1.6"/><rect x="2.5" y="7" width="9.5" height="8" fill="#c0c0c0"/><rect x="6.3" y="9.5" width="2" height="3" fill="#232323"/></svg>
<svg style="position:absolute;left:1368px;top:1217px;" width="18" height="14" viewBox="0 0 18 14"><rect x="1.5" y="1.5" width="10" height="11" fill="none" stroke="#c0c0c0" stroke-width="1.6"/><path d="M1.5 7 h10" stroke="#c0c0c0" stroke-width="1.3"/><path d="M11.5 4 l5 2 v2.5 l-5 2" fill="#c0c0c0"/></svg>
<div style="left:1261px;top:1116px;width:38px;height:29px;background:#1461a8;"></div>
<div style="left:1261px;top:1151px;width:38px;height:29px;background:#1461a8;"></div>
<div style="left:1323px;top:1116px;width:38px;height:29px;background:#1461a8;"></div>
<div style="left:1323px;top:1151px;width:38px;height:88px;background:#1461a8;"></div>
<div class="t" style="left:980px;width:600px;text-align:center;top:1123.6px;font-size:11.5px;line-height:13.8px;color:#a8cced;letter-spacing:-0.5px;">V1</div>
<div class="t" style="left:980px;width:600px;text-align:center;top:1158.7px;font-size:11.5px;line-height:13.8px;color:#a8cced;letter-spacing:-0.5px;">A1</div>
<div class="t" style="left:1041px;width:600px;text-align:center;top:1064.8px;font-size:11.5px;line-height:13.8px;color:#8a8a8a;letter-spacing:-0.5px;">V3</div>
<div class="t" style="left:1041px;width:600px;text-align:center;top:1094.1px;font-size:11.5px;line-height:13.8px;color:#8a8a8a;letter-spacing:-0.5px;">V2</div>
<div class="t" style="left:1041px;width:600px;text-align:center;top:1123.6px;font-size:11.5px;line-height:13.8px;color:#a8cced;letter-spacing:-0.5px;">V1</div>
<div class="t" style="left:1041px;width:600px;text-align:center;top:1158.7px;font-size:11.5px;line-height:13.8px;color:#a8cced;letter-spacing:-0.5px;">A1</div>
<div class="t" style="left:1041px;width:600px;text-align:center;top:1187.7px;font-size:11.5px;line-height:13.8px;color:#a8cced;letter-spacing:-0.5px;">A2</div>
<div class="t" style="left:1041px;width:600px;text-align:center;top:1217.5px;font-size:11.5px;line-height:13.8px;color:#a8cced;letter-spacing:-0.5px;">A3</div>
<svg style="position:absolute;left:1400px;top:1066px;" width="17" height="12" viewBox="0 0 17 12"><path d="M1.5 6 q7 -6.5 14 0 q-7 6.5 -14 0z" fill="none" stroke="#d0d0d0" stroke-width="2"/><circle cx="8.5" cy="6" r="2.5" fill="#d0d0d0"/></svg>
<svg style="position:absolute;left:1400px;top:1095px;" width="17" height="12" viewBox="0 0 17 12"><path d="M1.5 6 q7 -6.5 14 0 q-7 6.5 -14 0z" fill="none" stroke="#d0d0d0" stroke-width="2"/><circle cx="8.5" cy="6" r="2.5" fill="#d0d0d0"/></svg>
<svg style="position:absolute;left:1400px;top:1124px;" width="17" height="14" viewBox="0 0 17 14"><path d="M1.5 7 q7 -6.5 14 0 q-7 6.5 -14 0z" fill="none" stroke="#3a8ee8" stroke-width="2"/><circle cx="8.5" cy="7" r="2.5" fill="#3a8ee8"/><path d="M3 1.5 l11 11" stroke="#3a8ee8" stroke-width="1.5"/></svg>
<div class="t" style="left:1108px;width:600px;text-align:center;top:1159.0px;font-size:11px;line-height:13.2px;color:#7e7e7e;">M</div>
<div class="t" style="left:1140px;width:600px;text-align:center;top:1159.0px;font-size:11px;line-height:13.2px;color:#7e7e7e;">S</div>
<svg style="position:absolute;left:1465px;top:1156px;" width="16" height="20" viewBox="0 0 16 20"><rect x="5" y="1" width="6" height="11" rx="3" fill="#c8c8c8"/><path d="M3 8 a5 5 0 0 0 10 0 M8 13 v4 M5 18 h6" fill="none" stroke="#c8c8c8" stroke-width="1.5"/></svg>
<div class="t" style="left:1108px;width:600px;text-align:center;top:1188.0px;font-size:11px;line-height:13.2px;color:#7e7e7e;">M</div>
<div class="t" style="left:1140px;width:600px;text-align:center;top:1188.0px;font-size:11px;line-height:13.2px;color:#7e7e7e;">S</div>
<svg style="position:absolute;left:1465px;top:1185px;" width="16" height="20" viewBox="0 0 16 20"><rect x="5" y="1" width="6" height="11" rx="3" fill="#c8c8c8"/><path d="M3 8 a5 5 0 0 0 10 0 M8 13 v4 M5 18 h6" fill="none" stroke="#c8c8c8" stroke-width="1.5"/></svg>
<div class="t" style="left:1108px;width:600px;text-align:center;top:1217.8px;font-size:11px;line-height:13.2px;color:#7e7e7e;">M</div>
<div class="t" style="left:1140px;width:600px;text-align:center;top:1217.8px;font-size:11px;line-height:13.2px;color:#7e7e7e;">S</div>
<svg style="position:absolute;left:1465px;top:1214px;" width="16" height="20" viewBox="0 0 16 20"><rect x="5" y="1" width="6" height="11" rx="3" fill="#c8c8c8"/><path d="M3 8 a5 5 0 0 0 10 0 M8 13 v4 M5 18 h6" fill="none" stroke="#c8c8c8" stroke-width="1.5"/></svg>
<svg style="position:absolute;left:1303px;top:1245px;" width="14" height="16" viewBox="0 0 14 16"><path d="M4 7 v-2.5 a3 3 0 0 1 6 0" fill="none" stroke="#c0c0c0" stroke-width="1.6"/><rect x="2.5" y="7" width="9.5" height="8" fill="#c0c0c0"/></svg>
<div class="t" style="left:1326px;top:1245.0px;font-size:14px;line-height:16.8px;color:#8a8a8a;letter-spacing:1.5px;">主声道</div>
<div class="t" style="left:1125px;width:600px;text-align:center;top:1246.2px;font-size:12px;line-height:14.4px;color:#2b72c6;letter-spacing:-0.4px;">0.0</div>
<svg style="position:absolute;left:1500px;top:1240px;" width="16" height="16" viewBox="0 0 16 16"><path d="M1 2 l7 6 l-7 6z M15 2 l-7 6 l7 6z" fill="#d0d0d0"/><path d="M1 1 v14 M15 1 v14" stroke="#d0d0d0" stroke-width="1.5"/></svg>
<div style="left:1247px;top:1268px;width:278px;height:1px;background:#2a2a2a;"></div>
<div style="left:1268px;top:1331px;width:126px;height:9px;background:#2c2c2c;border-radius:4px;"></div>
<svg style="position:absolute;left:1260px;top:1328px;" width="16" height="16" viewBox="0 0 16 16"><circle cx="8" cy="8" r="5" fill="#232323" stroke="#9a9a9a" stroke-width="2"/></svg>
<svg style="position:absolute;left:1386px;top:1328px;" width="16" height="16" viewBox="0 0 16 16"><circle cx="8" cy="8" r="5" fill="#232323" stroke="#9a9a9a" stroke-width="2"/></svg>
<div class="t" style="left:1527px;top:933.2px;font-size:13px;line-height:15.6px;color:#a8a8a8;letter-spacing:-0.4px;">:00:00</div>
<div class="t" style="left:1320.0px;width:600px;text-align:center;top:933.2px;font-size:13px;line-height:15.6px;color:#a8a8a8;letter-spacing:-0.2px;">00:00:01:00</div>
<div class="t" style="left:1412.1px;width:600px;text-align:center;top:933.2px;font-size:13px;line-height:15.6px;color:#a8a8a8;letter-spacing:-0.2px;">00:00:02:00</div>
<div class="t" style="left:1504.2px;width:600px;text-align:center;top:933.2px;font-size:13px;line-height:15.6px;color:#a8a8a8;letter-spacing:-0.2px;">00:00:03:00</div>
<div class="t" style="left:1596.3px;width:600px;text-align:center;top:933.2px;font-size:13px;line-height:15.6px;color:#a8a8a8;letter-spacing:-0.2px;">00:00:04:00</div>
<div class="t" style="left:1688.4px;width:600px;text-align:center;top:933.2px;font-size:13px;line-height:15.6px;color:#a8a8a8;letter-spacing:-0.2px;">00:00:05:00</div>
<div class="t" style="left:1780.5px;width:600px;text-align:center;top:933.2px;font-size:13px;line-height:15.6px;color:#a8a8a8;letter-spacing:-0.2px;">00:00:06:00</div>
<div class="t" style="left:1872.6px;width:600px;text-align:center;top:933.2px;font-size:13px;line-height:15.6px;color:#a8a8a8;letter-spacing:-0.2px;">00:00:07:00</div>
<div class="t" style="left:1964.6999999999998px;width:600px;text-align:center;top:933.2px;font-size:13px;line-height:15.6px;color:#a8a8a8;letter-spacing:-0.2px;">00:00:08:00</div>
<div class="t" style="left:2056.8px;width:600px;text-align:center;top:933.2px;font-size:13px;line-height:15.6px;color:#a8a8a8;letter-spacing:-0.2px;">00:00:09:00</div>
<div class="t" style="left:2148.9px;width:600px;text-align:center;top:933.2px;font-size:13px;line-height:15.6px;color:#a8a8a8;letter-spacing:-0.2px;">00:00:10:00</div>
<div class="t" style="left:2241.0px;width:600px;text-align:center;top:933.2px;font-size:13px;line-height:15.6px;color:#a8a8a8;letter-spacing:-0.2px;">00:00:11:00</div>
<div class="t" style="left:2597px;top:933.2px;font-size:13px;line-height:15.6px;color:#a8a8a8;letter-spacing:-0.4px;">00:00:</div>
<svg style="position:absolute;left:1527px;top:951px;" width="1110" height="13" viewBox="0 0 1110 13"><rect x="0.0" y="1" width="1" height="11" fill="#5a5a5a"/><rect x="7.7" y="7" width="1" height="5" fill="#5a5a5a"/><rect x="15.3" y="7" width="1" height="5" fill="#5a5a5a"/><rect x="23.0" y="7" width="1" height="5" fill="#5a5a5a"/><rect x="30.7" y="7" width="1" height="5" fill="#5a5a5a"/><rect x="38.4" y="7" width="1" height="5" fill="#5a5a5a"/><rect x="46.0" y="5" width="1" height="7" fill="#5a5a5a"/><rect x="53.7" y="7" width="1" height="5" fill="#5a5a5a"/><rect x="61.4" y="7" width="1" height="5" fill="#5a5a5a"/><rect x="69.1" y="7" width="1" height="5" fill="#5a5a5a"/><rect x="76.8" y="7" width="1" height="5" fill="#5a5a5a"/><rect x="84.4" y="7" width="1" height="5" fill="#5a5a5a"/><rect x="92.1" y="1" width="1" height="11" fill="#5a5a5a"/><rect x="99.8" y="7" width="1" height="5" fill="#5a5a5a"/><rect x="107.4" y="7" width="1" height="5" fill="#5a5a5a"/><rect x="115.1" y="7" width="1" height="5" fill="#5a5a5a"/><rect x="122.8" y="7" width="1" height="5" fill="#5a5a5a"/><rect x="130.5" y="7" width="1" height="5" fill="#5a5a5a"/><rect x="138.2" y="5" width="1" height="7" fill="#5a5a5a"/><rect x="145.8" y="7" width="1" height="5" fill="#5a5a5a"/><rect x="153.5" y="7" width="1" height="5" fill="#5a5a5a"/><rect x="161.2" y="7" width="1" height="5" fill="#5a5a5a"/><rect x="168.8" y="7" width="1" height="5" fill="#5a5a5a"/><rect x="176.5" y="7" width="1" height="5" fill="#5a5a5a"/><rect x="184.2" y="1" width="1" height="11" fill="#5a5a5a"/><rect x="191.9" y="7" width="1" height="5" fill="#5a5a5a"/><rect x="199.5" y="7" width="1" height="5" fill="#5a5a5a"/><rect x="207.2" y="7" width="1" height="5" fill="#5a5a5a"/><rect x="214.9" y="7" width="1" height="5" fill="#5a5a5a"/><rect x="222.6" y="7" width="1" height="5" fill="#5a5a5a"/><rect x="230.2" y="5" width="1" height="7" fill="#5a5a5a"/><rect x="237.9" y="7" width="1" height="5" fill="#5a5a5a"/><rect x="245.6" y="7" width="1" height="5" fill="#5a5a5a"/><rect x="253.3" y="7" width="1" height="5" fill="#5a5a5a"/><rect x="260.9" y="7" width="1" height="5" fill="#5a5a5a"/><rect x="268.6" y="7" width="1" height="5" fill="#5a5a5a"/><rect x="276.3" y="1" width="1" height="11" fill="#5a5a5a"/><rect x="284.0" y="7" width="1" height="5" fill="#5a5a5a"/><rect x="291.6" y="7" width="1" height="5" fill="#5a5a5a"/><rect x="299.3" y="7" width="1" height="5" fill="#5a5a5a"/><rect x="307.0" y="7" width="1" height="5" fill="#5a5a5a"/><rect x="314.7" y="7" width="1" height="5" fill="#5a5a5a"/><rect x="322.3" y="5" width="1" height="7" fill="#5a5a5a"/><rect x="330.0" y="7" width="1" height="5" fill="#5a5a5a"/><rect x="337.7" y="7" width="1" height="5" fill="#5a5a5a"/><rect x="345.4" y="7" width="1" height="5" fill="#5a5a5a"/><rect x="353.0" y="7" width="1" height="5" fill="#5a5a5a"/><rect x="360.7" y="7" width="1" height="5" fill="#5a5a5a"/><rect x="368.4" y="1" width="1" height="11" fill="#5a5a5a"/><rect x="376.1" y="7" width="1" height="5" fill="#5a5a5a"/><rect x="383.8" y="7" width="1" height="5" fill="#5a5a5a"/><rect x="391.4" y="7" width="1" height="5" fill="#5a5a5a"/><rect x="399.1" y="7" width="1" height="5" fill="#5a5a5a"/><rect x="406.8" y="7" width="1" height="5" fill="#5a5a5a"/><rect x="414.4" y="5" width="1" height="7" fill="#5a5a5a"/><rect x="422.1" y="7" width="1" height="5" fill="#5a5a5a"/><rect x="429.8" y="7" width="1" height="5" fill="#5a5a5a"/><rect x="437.5" y="7" width="1" height="5" fill="#5a5a5a"/><rect x="445.1" y="7" width="1" height="5" fill="#5a5a5a"/><rect x="452.8" y="7" width="1" height="5" fill="#5a5a5a"/><rect x="460.5" y="1" width="1" height="11" fill="#5a5a5a"/><rect x="468.2" y="7" width="1" height="5" fill="#5a5a5a"/><rect x="475.8" y="7" width="1" height="5" fill="#5a5a5a"/><rect x="483.5" y="7" width="1" height="5" fill="#5a5a5a"/><rect x="491.2" y="7" width="1" height="5" fill="#5a5a5a"/><rect x="498.9" y="7" width="1" height="5" fill="#5a5a5a"/><rect x="506.5" y="5" width="1" height="7" fill="#5a5a5a"/><rect x="514.2" y="7" width="1" height="5" fill="#5a5a5a"/><rect x="521.9" y="7" width="1" height="5" fill="#5a5a5a"/><rect x="529.6" y="7" width="1" height="5" fill="#5a5a5a"/><rect x="537.2" y="7" width="1" height="5" fill="#5a5a5a"/><rect x="544.9" y="7" width="1" height="5" fill="#5a5a5a"/><rect x="552.6" y="1" width="1" height="11" fill="#5a5a5a"/><rect x="560.3" y="7" width="1" height="5" fill="#5a5a5a"/><rect x="567.9" y="7" width="1" height="5" fill="#5a5a5a"/><rect x="575.6" y="7" width="1" height="5" fill="#5a5a5a"/><rect x="583.3" y="7" width="1" height="5" fill="#5a5a5a"/><rect x="591.0" y="7" width="1" height="5" fill="#5a5a5a"/><rect x="598.6" y="5" width="1" height="7" fill="#5a5a5a"/><rect x="606.3" y="7" width="1" height="5" fill="#5a5a5a"/><rect x="614.0" y="7" width="1" height="5" fill="#5a5a5a"/><rect x="621.7" y="7" width="1" height="5" fill="#5a5a5a"/><rect x="629.4" y="7" width="1" height="5" fill="#5a5a5a"/><rect x="637.0" y="7" width="1" height="5" fill="#5a5a5a"/><rect x="644.7" y="1" width="1" height="11" fill="#5a5a5a"/><rect x="652.4" y="7" width="1" height="5" fill="#5a5a5a"/><rect x="660.0" y="7" width="1" height="5" fill="#5a5a5a"/><rect x="667.7" y="7" width="1" height="5" fill="#5a5a5a"/><rect x="675.4" y="7" width="1" height="5" fill="#5a5a5a"/><rect x="683.1" y="7" width="1" height="5" fill="#5a5a5a"/><rect x="690.8" y="5" width="1" height="7" fill="#5a5a5a"/><rect x="698.4" y="7" width="1" height="5" fill="#5a5a5a"/><rect x="706.1" y="7" width="1" height="5" fill="#5a5a5a"/><rect x="713.8" y="7" width="1" height="5" fill="#5a5a5a"/><rect x="721.4" y="7" width="1" height="5" fill="#5a5a5a"/><rect x="729.1" y="7" width="1" height="5" fill="#5a5a5a"/><rect x="736.8" y="1" width="1" height="11" fill="#5a5a5a"/><rect x="744.5" y="7" width="1" height="5" fill="#5a5a5a"/><rect x="752.1" y="7" width="1" height="5" fill="#5a5a5a"/><rect x="759.8" y="7" width="1" height="5" fill="#5a5a5a"/><rect x="767.5" y="7" width="1" height="5" fill="#5a5a5a"/><rect x="775.2" y="7" width="1" height="5" fill="#5a5a5a"/><rect x="782.8" y="5" width="1" height="7" fill="#5a5a5a"/><rect x="790.5" y="7" width="1" height="5" fill="#5a5a5a"/><rect x="798.2" y="7" width="1" height="5" fill="#5a5a5a"/><rect x="805.9" y="7" width="1" height="5" fill="#5a5a5a"/><rect x="813.5" y="7" width="1" height="5" fill="#5a5a5a"/><rect x="821.2" y="7" width="1" height="5" fill="#5a5a5a"/><rect x="828.9" y="1" width="1" height="11" fill="#5a5a5a"/><rect x="836.6" y="7" width="1" height="5" fill="#5a5a5a"/><rect x="844.2" y="7" width="1" height="5" fill="#5a5a5a"/><rect x="851.9" y="7" width="1" height="5" fill="#5a5a5a"/><rect x="859.6" y="7" width="1" height="5" fill="#5a5a5a"/><rect x="867.3" y="7" width="1" height="5" fill="#5a5a5a"/><rect x="874.9" y="5" width="1" height="7" fill="#5a5a5a"/><rect x="882.6" y="7" width="1" height="5" fill="#5a5a5a"/><rect x="890.3" y="7" width="1" height="5" fill="#5a5a5a"/><rect x="898.0" y="7" width="1" height="5" fill="#5a5a5a"/><rect x="905.6" y="7" width="1" height="5" fill="#5a5a5a"/><rect x="913.3" y="7" width="1" height="5" fill="#5a5a5a"/><rect x="921.0" y="1" width="1" height="11" fill="#5a5a5a"/><rect x="928.7" y="7" width="1" height="5" fill="#5a5a5a"/><rect x="936.3" y="7" width="1" height="5" fill="#5a5a5a"/><rect x="944.0" y="7" width="1" height="5" fill="#5a5a5a"/><rect x="951.7" y="7" width="1" height="5" fill="#5a5a5a"/><rect x="959.4" y="7" width="1" height="5" fill="#5a5a5a"/><rect x="967.0" y="5" width="1" height="7" fill="#5a5a5a"/><rect x="974.7" y="7" width="1" height="5" fill="#5a5a5a"/><rect x="982.4" y="7" width="1" height="5" fill="#5a5a5a"/><rect x="990.1" y="7" width="1" height="5" fill="#5a5a5a"/><rect x="997.8" y="7" width="1" height="5" fill="#5a5a5a"/><rect x="1005.4" y="7" width="1" height="5" fill="#5a5a5a"/><rect x="1013.1" y="1" width="1" height="11" fill="#5a5a5a"/><rect x="1020.8" y="7" width="1" height="5" fill="#5a5a5a"/><rect x="1028.5" y="7" width="1" height="5" fill="#5a5a5a"/><rect x="1036.1" y="7" width="1" height="5" fill="#5a5a5a"/><rect x="1043.8" y="7" width="1" height="5" fill="#5a5a5a"/><rect x="1051.5" y="7" width="1" height="5" fill="#5a5a5a"/><rect x="1059.1" y="5" width="1" height="7" fill="#5a5a5a"/><rect x="1066.8" y="7" width="1" height="5" fill="#5a5a5a"/><rect x="1074.5" y="7" width="1" height="5" fill="#5a5a5a"/><rect x="1082.2" y="7" width="1" height="5" fill="#5a5a5a"/><rect x="1089.8" y="7" width="1" height="5" fill="#5a5a5a"/><rect x="1097.5" y="7" width="1" height="5" fill="#5a5a5a"/></svg>
<div style="left:1526px;top:964px;width:497px;height:3px;background:#e0d020;"></div>
<div style="left:1831px;top:962px;width:2px;height:367px;background:#3a8ee8;"></div>
<svg style="position:absolute;left:1825px;top:949px;" width="15" height="15" viewBox="0 0 15 15"><path d="M1 1 h13 v9 l-6.5 4 l-6.5 -4z" fill="#3a8ee8"/></svg>
<div style="left:1527px;top:1087px;width:496px;height:28px;background:#6e9ad0;border:3px solid #e8e8e8;border-radius:3px;"></div>
<svg style="position:absolute;left:1537px;top:1092px;" width="16" height="16" viewBox="0 0 16 16"><rect x="1" y="1" width="14" height="14" rx="2" fill="#e8b020"/><text x="3" y="12" font-family="Liberation Serif" font-style="italic" font-size="10" fill="#6a4a00">fx</text></svg>
<div class="t" style="left:1560px;top:1090.9px;font-size:11px;line-height:13.2px;color:#2a3a50;letter-spacing:-0.5px;">2020-05-08 131003.mov [V]</div>
<div style="left:1527px;top:1116px;width:1104px;height:29px;background:#78a2d6;"></div>
<div style="left:1536px;top:1120px;width:12px;height:12px;background:#555e68;border:1px solid #8a96a4;"></div>
<div class="t" style="left:1560px;top:1119.6px;font-size:11.5px;line-height:13.8px;color:#2a3a50;letter-spacing:-0.5px;">4K重庆轻轨穿楼.mov [V]</div>
<div style="left:1527px;top:1151px;width:496px;height:28px;background:#3e5878;border:3px solid #e8e8e8;border-radius:3px;"></div>
<div style="left:1530px;top:1164px;width:490px;height:1px;background:#8aa6c8;"></div>
<div style="left:1536px;top:1154px;width:12px;height:12px;background:#555e68;border:1px solid #8a96a4;"></div>
<svg style="position:absolute;left:1527px;top:1180px;" width="1104" height="29" viewBox="0 0 1104 29"><rect width="1104" height="29" fill="#3a5474"/><path d="M0 14 L0 8.9 L3 8.5 L6 9.3 L9 8.4 L12 8.2 L15 9.0 L18 10.1 L21 9.6 L24 10.0 L27 9.7 L30 10.2 L33 10.1 L36 10.3 L39 10.1 L42 10.6 L45 10.8 L48 10.9 L51 10.9 L54 10.6 L57 8.2 L60 9.3 L63 9.4 L66 9.3 L69 8.0 L72 8.7 L75 9.9 L78 9.6 L81 9.6 L84 9.6 L87 9.2 L90 10.2 L93 11.0 L96 11.0 L99 10.9 L102 11.1 L105 11.4 L108 11.1 L111 11.5 L114 8.4 L117 8.9 L120 7.8 L123 8.8 L126 9.4 L129 8.3 L132 9.5 L135 10.1 L138 9.2 L141 9.5 L144 10.5 L147 9.8 L150 10.3 L153 10.3 L156 10.3 L159 10.2 L162 11.4 L165 10.7 L168 11.2 L171 7.3 L174 8.0 L177 9.1 L180 9.1 L183 9.1 L186 8.6 L189 9.8 L192 9.5 L195 9.3 L198 9.3 L201 10.3 L204 9.7 L207 10.1 L210 10.4 L213 10.0 L216 10.2 L219 11.1 L222 10.9 L225 11.0 L228 7.0 L231 8.5 L234 9.1 L237 9.3 L240 8.9 L243 8.9 L246 8.3 L249 9.5 L252 9.1 L255 9.5 L258 10.7 L261 9.8 L264 10.0 L267 10.6 L270 11.1 L273 11.3 L276 11.2 L279 11.4 L282 11.8 L285 8.7 L288 8.0 L291 8.7 L294 8.5 L297 9.2 L300 9.3 L303 9.3 L306 9.9 L309 9.9 L312 9.3 L315 10.2 L318 10.1 L321 10.8 L324 11.2 L327 10.5 L330 10.2 L333 11.2 L336 10.7 L339 10.8 L342 7.8 L345 7.8 L348 9.5 L351 8.8 L354 8.5 L357 8.4 L360 9.6 L363 10.1 L366 8.8 L369 9.5 L372 10.3 L375 10.1 L378 10.8 L381 10.6 L384 11.0 L387 10.0 L390 10.3 L393 10.6 L396 11.2 L399 7.7 L402 8.3 L405 9.3 L408 9.4 L411 9.2 L414 8.3 L417 9.5 L420 9.6 L423 9.5 L426 10.2 L429 9.4 L432 9.5 L435 10.6 L438 10.1 L441 10.8 L444 10.5 L447 11.1 L450 11.5 L453 11.6 L456 8.7 L459 9.1 L462 8.0 L465 8.8 L468 9.7 L471 8.9 L474 9.8 L477 8.5 L480 9.7 L483 10.2 L486 9.2 L489 10.7 L492 9.7 L495 10.3 L498 10.2 L501 11.1 L504 11.5 L507 11.4 L510 11.3 L513 7.6 L516 7.4 L519 8.3 L522 8.0 L525 9.2 L528 8.4 L531 8.9 L534 9.3 L537 9.9 L540 9.0 L543 9.5 L546 10.5 L549 9.5 L552 10.0 L555 10.6 L558 11.4 L561 11.2 L564 10.7 L567 11.3 L570 8.9 L573 8.1 L576 9.7 L579 7.9 L582 8.2 L585 9.5 L588 8.6 L591 9.7 L594 10.0 L597 9.7 L600 9.3 L603 10.3 L606 10.1 L609 10.6 L612 9.8 L615 10.9 L618 11.1 L621 10.6 L624 11.5 L627 8.2 L630 8.4 L633 8.1 L636 8.1 L639 8.5 L642 9.8 L645 8.6 L648 9.1 L651 9.6 L654 10.1 L657 10.0 L660 10.6 L663 10.7 L666 11.1 L669 11.0 L672 11.0 L675 10.9 L678 10.4 L681 11.6 L684 7.9 L687 8.8 L690 7.8 L693 8.9 L696 8.3 L699 8.1 L702 8.2 L705 9.1 L708 9.7 L711 9.4 L714 10.2 L717 10.6 L720 10.4 L723 10.7 L726 10.7 L729 10.6 L732 10.9 L735 10.7 L738 11.7 L741 8.9 L744 8.7 L747 9.1 L750 8.5 L753 8.2 L756 8.5 L759 8.4 L762 9.5 L765 9.7 L768 10.2 L771 10.6 L774 9.5 L777 10.4 L780 10.1 L783 10.1 L786 10.9 L789 10.6 L792 11.6 L795 10.6 L798 9.1 L801 8.3 L804 9.4 L807 9.5 L810 9.1 L813 8.9 L816 9.9 L819 8.7 L822 9.8 L825 9.7 L828 9.6 L831 10.4 L834 10.4 L837 10.4 L840 10.8 L843 10.4 L846 10.6 L849 11.1 L852 11.8 L855 7.5 L858 8.4 L861 8.7 L864 8.8 L867 8.0 L870 8.8 L873 8.8 L876 9.0 L879 9.3 L882 9.8 L885 10.7 L888 10.6 L891 9.9 L894 10.5 L897 10.0 L900 10.1 L903 11.6 L906 10.7 L909 11.7 L912 8.6 L915 8.4 L918 7.9 L921 9.4 L924 8.8 L927 9.1 L930 10.1 L933 9.9 L936 9.8 L939 9.4 L942 9.7 L945 10.0 L948 10.3 L951 10.7 L954 11.0 L957 10.3 L960 10.6 L963 11.3 L966 10.9 L969 7.7 L972 8.1 L975 7.8 L978 9.3 L981 9.5 L984 9.0 L987 8.3 L990 9.5 L993 10.2 L996 9.6 L999 10.0 L1002 9.9 L1005 10.6 L1008 10.0 L1011 10.6 L1014 11.0 L1017 11.2 L1020 11.2 L1023 11.1 L1026 7.6 L1029 8.5 L1032 9.0 L1035 8.5 L1038 8.4 L1041 8.9 L1044 9.9 L1047 10.0 L1050 10.0 L1053 9.3 L1056 10.3 L1059 9.7 L1062 9.8 L1065 9.8 L1068 11.0 L1071 10.9 L1074 11.3 L1077 11.4 L1080 11.1 L1083 7.1 L1086 7.4 L1089 8.9 L1092 8.8 L1095 8.9 L1098 8.2 L1101 8.8 L1104 8.7 L1104 14 Z" fill="#86a8d4"/><path d="M0 28 L0 23.7 L3 24.1 L6 24.7 L9 24.6 L12 24.1 L15 24.1 L18 24.1 L21 24.5 L24 25.3 L27 24.8 L30 24.6 L33 24.7 L36 25.6 L39 25.5 L42 25.5 L45 25.6 L48 21.6 L51 23.3 L54 22.8 L57 23.9 L60 23.6 L63 23.2 L66 23.1 L69 24.1 L72 23.9 L75 24.4 L78 24.8 L81 23.9 L84 25.0 L87 24.2 L90 24.9 L93 25.6 L96 25.8 L99 25.1 L102 25.8 L105 25.1 L108 26.3 L111 22.7 L114 23.3 L117 22.5 L120 23.8 L123 23.1 L126 22.7 L129 23.1 L132 24.6 L135 24.1 L138 23.3 L141 24.9 L144 24.0 L147 24.2 L150 24.3 L153 24.8 L156 25.1 L159 25.7 L162 25.0 L165 25.4 L168 26.4 L171 22.2 L174 22.8 L177 23.3 L180 23.2 L183 22.8 L186 23.5 L189 24.1 L192 24.2 L195 24.2 L198 24.4 L201 24.1 L204 24.3 L207 24.4 L210 24.3 L213 25.0 L216 25.4 L219 25.7 L222 24.9 L225 26.0 L228 25.2 L231 21.5 L234 23.0 L237 23.3 L240 24.0 L243 23.3 L246 24.2 L249 24.3 L252 23.8 L255 23.7 L258 24.0 L261 23.8 L264 24.3 L267 24.0 L270 25.0 L273 25.5 L276 25.2 L279 25.8 L282 25.3 L285 25.9 L288 25.3 L291 25.3 L294 22.3 L297 24.1 L300 23.9 L303 22.6 L306 23.7 L309 23.3 L312 23.5 L315 24.5 L318 24.3 L321 24.7 L324 24.8 L327 24.2 L330 25.0 L333 24.6 L336 24.7 L339 25.3 L342 24.8 L345 25.2 L348 25.9 L351 25.6 L354 23.4 L357 22.9 L360 23.0 L363 23.3 L366 23.5 L369 23.1 L372 24.4 L375 24.4 L378 23.6 L381 24.2 L384 24.4 L387 24.9 L390 25.0 L393 24.9 L396 25.2 L399 24.7 L402 25.8 L405 25.7 L408 25.2 L411 26.2 L414 22.3 L417 22.0 L420 23.9 L423 22.9 L426 23.7 L429 22.6 L432 23.1 L435 23.6 L438 24.7 L441 24.3 L444 24.2 L447 24.5 L450 24.3 L453 23.9 L456 25.5 L459 25.5 L462 25.2 L465 25.6 L468 25.9 L471 26.0 L474 25.9 L477 22.8 L480 22.4 L483 22.8 L486 23.0 L489 23.2 L492 23.1 L495 23.9 L498 24.0 L501 23.7 L504 24.1 L507 24.9 L510 24.0 L513 25.2 L516 25.5 L519 25.3 L522 25.8 L525 25.6 L528 25.8 L531 25.9 L534 25.3 L537 23.3 L540 23.6 L543 24.1 L546 22.2 L549 23.0 L552 23.8 L555 24.0 L558 24.3 L561 23.9 L564 24.0 L567 23.9 L570 24.8 L573 25.0 L576 24.9 L579 25.3 L582 24.9 L585 25.1 L588 25.9 L591 25.0 L594 25.8 L597 21.9 L600 22.9 L603 23.1 L606 24.0 L609 23.0 L612 24.3 L615 23.5 L618 23.5 L621 24.3 L624 24.2 L627 24.8 L630 24.6 L633 24.9 L636 24.9 L639 24.2 L642 25.6 L645 25.2 L648 25.1 L651 25.4 L654 26.1 L657 26.2 L660 22.9 L663 22.5 L666 23.2 L669 23.5 L672 23.1 L675 23.9 L678 24.3 L681 23.9 L684 23.7 L687 24.6 L690 24.5 L693 25.0 L696 24.9 L699 25.5 L702 25.6 L705 24.9 L708 25.6 L711 25.8 L714 25.8 L717 25.3 L720 22.9 L723 22.7 L726 23.1 L729 23.4 L732 23.7 L735 24.0 L738 24.2 L741 24.4 L744 23.5 L747 24.3 L750 23.4 L753 24.1 L756 24.8 L759 25.2 L762 25.0 L765 24.6 L768 25.5 L771 25.0 L774 25.3 L777 25.9 L780 22.1 L783 22.8 L786 22.2 L789 23.6 L792 23.2 L795 23.2 L798 24.6 L801 23.3 L804 24.4 L807 24.6 L810 24.6 L813 24.2 L816 24.7 L819 25.1 L822 25.1 L825 24.6 L828 25.3 L831 25.2 L834 25.9 L837 25.5 L840 26.1 L843 22.1 L846 22.6 L849 24.0 L852 23.2 L855 23.5 L858 23.2 L861 23.6 L864 24.5 L867 24.0 L870 24.0 L873 23.7 L876 24.0 L879 24.9 L882 24.6 L885 24.7 L888 25.9 L891 25.0 L894 25.1 L897 25.3 L900 26.2 L903 21.8 L906 23.0 L909 23.1 L912 24.2 L915 23.8 L918 23.0 L921 23.4 L924 24.2 L927 24.1 L930 23.4 L933 24.0 L936 24.2 L939 25.1 L942 24.8 L945 24.5 L948 25.3 L951 25.7 L954 25.3 L957 25.7 L960 25.5 L963 22.8 L966 23.4 L969 23.6 L972 23.8 L975 24.2 L978 23.9 L981 22.8 L984 24.4 L987 23.8 L990 24.8 L993 24.0 L996 24.4 L999 24.4 L1002 24.4 L1005 24.3 L1008 24.7 L1011 25.1 L1014 25.0 L1017 25.6 L1020 25.2 L1023 26.0 L1026 23.5 L1029 22.3 L1032 22.8 L1035 22.8 L1038 23.6 L1041 23.4 L1044 24.1 L1047 23.7 L1050 24.0 L1053 24.1 L1056 24.3 L1059 24.5 L1062 24.6 L1065 25.1 L1068 25.0 L1071 25.5 L1074 25.2 L1077 25.5 L1080 25.8 L1083 25.4 L1086 22.9 L1089 23.1 L1092 24.1 L1095 23.8 L1098 23.3 L1101 22.9 L1104 23.8 L1104 28 Z" fill="#86a8d4"/><rect x="0" y="14" width="1104" height="1.2" fill="#4a6a90"/></svg>
<div style="left:1536px;top:1183px;width:12px;height:12px;background:#555e68;border:1px solid #8a96a4;"></div>
<div style="left:1831px;top:1087px;width:2px;height:242px;background:#3a8ee8;opacity:0.85;"></div>
<div style="left:1247px;top:1329px;width:1385px;height:1px;background:#2a2a2a;"></div>
<div style="left:2633px;top:975px;width:9px;height:350px;background:#2c2c2c;border-radius:4px;"></div>
<svg style="position:absolute;left:2630px;top:971px;" width="16" height="16" viewBox="0 0 16 16"><circle cx="8" cy="8" r="5" fill="#1f1f1f" stroke="#9a9a9a" stroke-width="2"/></svg>
<svg style="position:absolute;left:2630px;top:1129px;" width="16" height="16" viewBox="0 0 16 16"><circle cx="8" cy="8" r="5" fill="#1f1f1f" stroke="#9a9a9a" stroke-width="2"/></svg>
<svg style="position:absolute;left:2630px;top:1150px;" width="16" height="16" viewBox="0 0 16 16"><circle cx="8" cy="8" r="5" fill="#1f1f1f" stroke="#9a9a9a" stroke-width="2"/></svg>
<svg style="position:absolute;left:2630px;top:1311px;" width="16" height="16" viewBox="0 0 16 16"><circle cx="8" cy="8" r="5" fill="#1f1f1f" stroke="#9a9a9a" stroke-width="2"/></svg>
<div style="left:2661px;top:881px;width:129px;height:478px;background:#232323;"></div>
<div style="left:2678px;top:912px;width:70px;height:405px;background:#1c1c1c;border:1px solid #2e2e2e;"></div>
<div style="left:2679px;top:913px;width:68px;height:10px;background:#141414;"></div>
<div style="left:2749px;top:915px;width:1px;height:400px;border-left:1px dotted #666;"></div>
<div style="left:2750px;top:924px;width:4px;height:1px;background:#777;"></div>
<div class="t" style="left:2757px;top:918.0px;font-size:10px;line-height:12.0px;color:#777;letter-spacing:-0.5px;">0</div>
<div style="left:2750px;top:963px;width:4px;height:1px;background:#777;"></div>
<div class="t" style="left:2757px;top:957.1px;font-size:10px;line-height:12.0px;color:#777;letter-spacing:-0.5px;">-6</div>
<div style="left:2750px;top:1002px;width:4px;height:1px;background:#777;"></div>
<div class="t" style="left:2757px;top:996.2px;font-size:10px;line-height:12.0px;color:#777;letter-spacing:-0.5px;">-12</div>
<div style="left:2750px;top:1041px;width:4px;height:1px;background:#777;"></div>
<div class="t" style="left:2757px;top:1035.3px;font-size:10px;line-height:12.0px;color:#777;letter-spacing:-0.5px;">-18</div>
<div style="left:2750px;top:1080px;width:4px;height:1px;background:#777;"></div>
<div class="t" style="left:2757px;top:1074.4px;font-size:10px;line-height:12.0px;color:#777;letter-spacing:-0.5px;">-24</div>
<div style="left:2750px;top:1120px;width:4px;height:1px;background:#777;"></div>
<div class="t" style="left:2757px;top:1113.5px;font-size:10px;line-height:12.0px;color:#777;letter-spacing:-0.5px;">-30</div>
<div style="left:2750px;top:1159px;width:4px;height:1px;background:#777;"></div>
<div class="t" style="left:2757px;top:1152.6px;font-size:10px;line-height:12.0px;color:#777;letter-spacing:-0.5px;">-36</div>
<div style="left:2750px;top:1198px;width:4px;height:1px;background:#777;"></div>
<div class="t" style="left:2757px;top:1191.7px;font-size:10px;line-height:12.0px;color:#777;letter-spacing:-0.5px;">-42</div>
<div style="left:2750px;top:1237px;width:4px;height:1px;background:#777;"></div>
<div class="t" style="left:2757px;top:1230.8px;font-size:10px;line-height:12.0px;color:#777;letter-spacing:-0.5px;">-48</div>
<div style="left:2750px;top:1276px;width:4px;height:1px;background:#777;"></div>
<div class="t" style="left:2757px;top:1269.9px;font-size:10px;line-height:12.0px;color:#777;letter-spacing:-0.5px;">-54</div>
<div style="left:2750px;top:1315px;width:4px;height:1px;background:#777;"></div>
<div class="t" style="left:2757px;top:1309.0px;font-size:10px;line-height:12.0px;color:#777;letter-spacing:-0.5px;">dB</div>
<div style="left:2680px;top:1314px;width:33px;height:2px;background:#b8c040;"></div>
<div style="left:2715px;top:1314px;width:32px;height:2px;background:#b8c040;"></div>
<div class="t" style="left:2395px;width:600px;text-align:center;top:1325.8px;font-size:12px;line-height:14.4px;color:#777;">S</div>
<div class="t" style="left:2429px;width:600px;text-align:center;top:1325.8px;font-size:12px;line-height:14.4px;color:#777;">S</div>
<div style="left:2453px;top:1128px;width:70px;height:76px;background:rgba(74,74,74,0.88);border:6px solid #1a6ed0;border-top-width:5px;border-radius:8px;box-shadow:0 0 3px #1a78e0;"></div>
<svg style="position:absolute;left:2460px;top:1156px;" width="56" height="24" viewBox="0 0 56 24"><path d="M46 12 H7 M15 5.5 L6.5 12 L15 18.5" fill="none" stroke="#eeeeee" stroke-width="2.8" stroke-linecap="round" stroke-linejoin="round"/></svg>
<div style="left:2453px;top:1215px;width:70px;height:76px;background:rgba(74,74,74,0.88);border:6px solid #1a6ed0;border-top-width:5px;border-radius:8px;box-shadow:0 0 3px #1a78e0;"></div>
<svg style="position:absolute;left:2460px;top:1244px;" width="56" height="24" viewBox="0 0 56 24"><path d="M6 12 H45 M37 5.5 L45.5 12 L37 18.5" fill="none" stroke="#eeeeee" stroke-width="2.8" stroke-linecap="round" stroke-linejoin="round"/></svg>
<div style="left:2453px;top:1302px;width:70px;height:76px;background:rgba(74,74,74,0.88);border:6px solid #1a6ed0;border-top-width:5px;border-radius:8px;box-shadow:0 0 3px #1a78e0;"></div>
<svg style="position:absolute;left:2460px;top:1331px;" width="56" height="24" viewBox="0 0 56 24"><path d="M6 12 H45 M37 5.5 L45.5 12 L37 18.5" fill="none" stroke="#eeeeee" stroke-width="2.8" stroke-linecap="round" stroke-linejoin="round"/></svg></body></html>
